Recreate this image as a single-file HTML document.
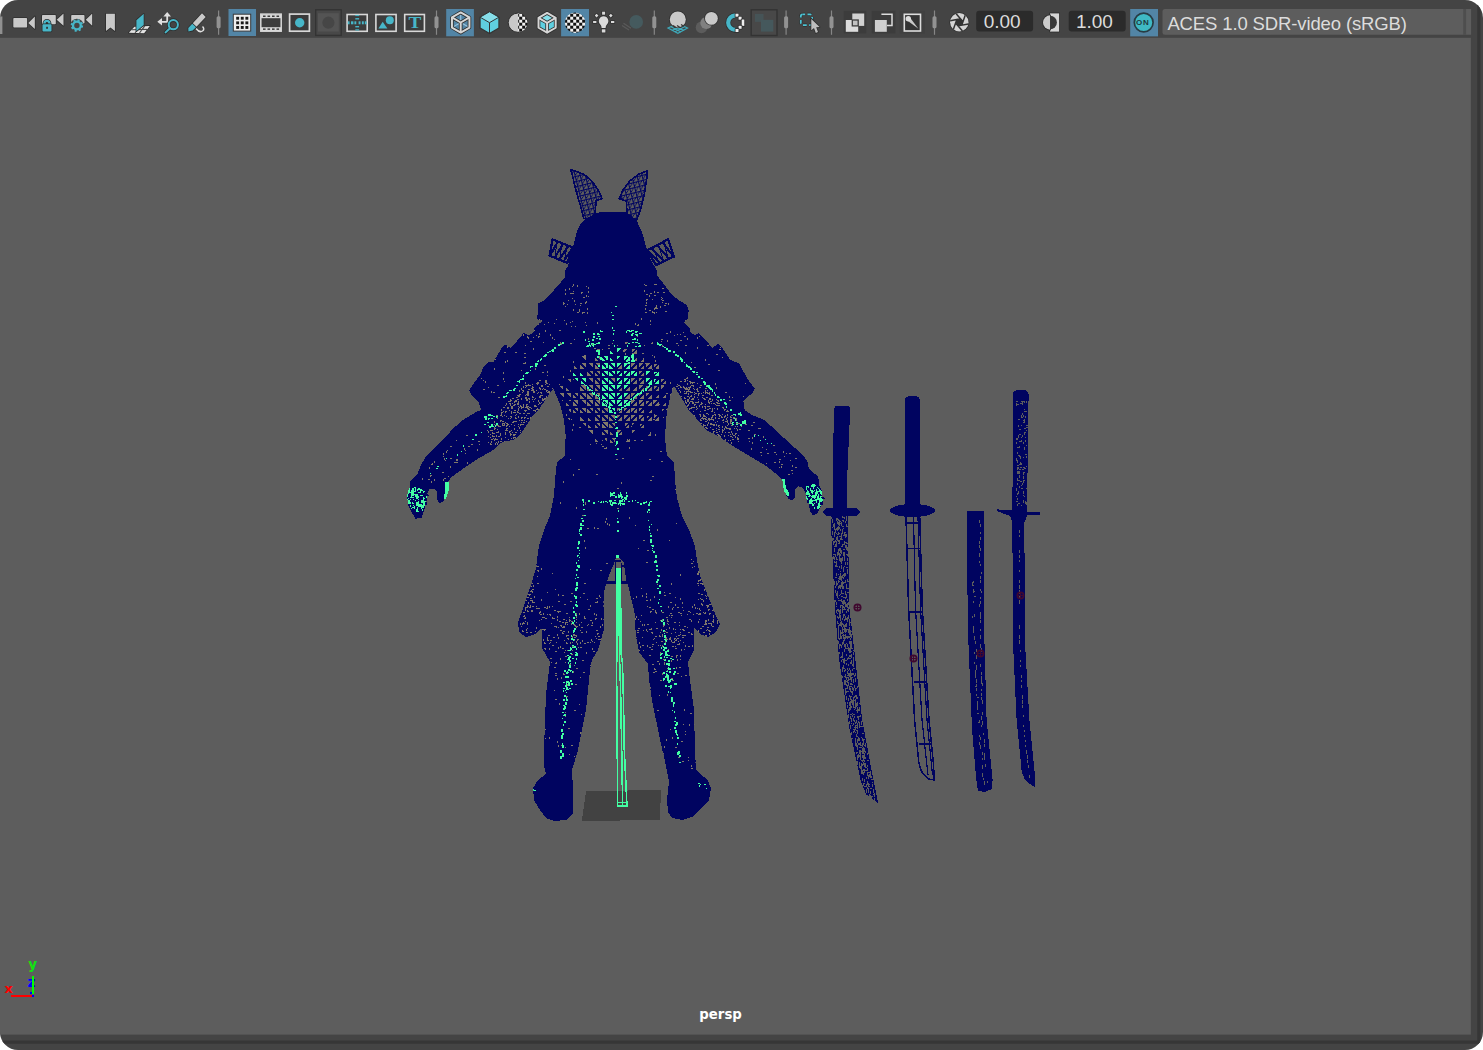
<!DOCTYPE html>
<html><head><meta charset="utf-8"><title>persp</title>
<style>
html,body{margin:0;padding:0;background:#fff;}
body{width:1483px;height:1050px;overflow:hidden;position:relative;}
#win{position:absolute;left:0;top:0;width:1483px;height:1050px;border-radius:18px;overflow:hidden;background:#444;}
#vp{position:absolute;left:0;top:38px;width:1471px;height:996.600px;background:#5d5d5d;}
#tbline{position:absolute;left:0;top:37px;width:1471px;height:1px;background:#494949;}
#rline{position:absolute;left:1477.300px;top:0;width:3.100px;height:1043.700px;background:#363636;}
#bline{position:absolute;left:0;top:1040.600px;width:1480.400px;height:3.100px;background:#363636;border-bottom-right-radius:2px;}
.t{position:absolute;white-space:nowrap;font-family:"Liberation Sans",sans-serif;color:#dcdcdc;line-height:1;}
.b{position:absolute;white-space:nowrap;font-family:"DejaVu Sans","Liberation Sans",sans-serif;font-weight:bold;line-height:1;}
</style></head><body>
<div id="win">
<svg width="1483" height="1050" viewBox="0 0 1483 1050" style="position:absolute;left:0;top:0">
<rect x="-1" y="37.800" width="1471.900" height="996.800" fill="#5d5d5d"/>
<rect x="1477.300" y="-1" width="3.100" height="1044.700" fill="#363636"/>
<rect x="-1" y="1040.600" width="1481.400" height="3.100" fill="#363636"/>
</svg>
<svg width="1483" height="1050" viewBox="0 0 1483 1050" shape-rendering="crispEdges" style="position:absolute;left:0;top:0">
<defs>
<pattern id="hx" width="5" height="5" patternUnits="userSpaceOnUse" patternTransform="rotate(-14)"><path d="M0 0.500H5M0.500 0V5M0 5L5 0" stroke="#000460" stroke-width="1.150" fill="none"/></pattern>
<pattern id="hf" width="5" height="5" patternUnits="userSpaceOnUse" patternTransform="rotate(20)"><path d="M0 0L5 5M0 0V5M2.5 0V5" stroke="#000460" stroke-width="1.2" fill="none"/></pattern>
<pattern id="tm" x="0.5" y="0.3" width="7.3" height="7.3" patternUnits="userSpaceOnUse"><path d="M1.5 2.5V6.3H5.3zM2.6 1.4H6.3V5z" fill="#80786a"/></pattern>
<pattern id="tc" x="0.5" y="0.3" width="7.3" height="7.3" patternUnits="userSpaceOnUse"><path d="M1.2 2.2V6.6H5.6zM2.3 1.1H6.6V5.3z" fill="#43ffa3"/></pattern>
<radialGradient id="tg" cx="0.5" cy="0.5" r="0.5"><stop offset="0.55" stop-color="#fff"/><stop offset="0.8" stop-color="#777"/><stop offset="1" stop-color="#000"/></radialGradient>
<clipPath id="bodyclip"><polygon points="596.0,213.5 601.0,211.5 617.0,211.5 626.0,212.5 632.0,216.5 636.4,220.2 639.1,225.7 641.5,231.0 643.5,236.7 645.7,245.4 648.0,253.0 652.0,262.0 656.7,270.0 657.3,276.0 663.3,283.3 671.3,294.0 679.3,300.7 686.7,304.7 688.7,310.0 688.0,318.0 684.0,322.7 690.0,328.7 690.7,332.7 695.3,335.3 698.7,332.7 706.0,340.7 712.7,348.0 718.0,343.3 722.0,347.3 730.0,359.3 735.3,362.0 739.3,363.3 743.3,371.3 748.7,380.7 754.7,388.7 752.7,392.7 743.3,400.7 744.7,410.0 752.0,415.0 764.6,420.0 780.6,434.9 793.1,446.3 802.3,454.3 808.0,462.3 808.6,468.0 818.3,477.1 818.9,484.0 821.7,490.9 822.9,500.0 820.6,506.9 817.1,513.7 812.6,515.4 810.3,511.4 808.6,503.4 805.7,493.1 802.3,487.4 797.7,486.3 794.9,489.7 795.4,497.7 792.0,500.6 788.6,498.9 786.3,495.4 782.3,479.4 776.0,473.7 765.7,465.7 754.3,458.9 742.9,452.0 731.4,445.1 720.0,437.1 706.0,430.0 696.0,418.0 688.7,410.0 680.7,396.7 674.0,386.0 670.0,398.0 667.3,410.0 666.0,420.0 665.0,438.0 667.0,456.0 674.0,462.0 675.0,480.0 677.0,498.0 682.0,516.0 689.0,530.0 695.0,546.0 697.0,560.0 700.0,576.0 708.0,596.0 716.0,616.0 720.0,624.0 716.0,632.0 708.0,637.0 700.0,634.0 694.0,628.0 694.0,650.0 688.0,662.0 690.0,680.0 694.0,710.0 695.0,750.0 696.0,770.0 700.0,774.0 707.0,779.0 711.0,788.0 709.0,800.0 700.0,810.0 692.0,817.0 682.0,820.0 672.0,818.0 668.0,812.0 667.0,800.0 669.0,782.0 666.0,766.0 661.0,744.0 656.0,720.0 652.0,700.0 649.0,680.0 648.0,664.0 639.0,652.0 635.8,635.0 634.6,613.6 632.8,605.0 630.3,594.7 627.7,584.0 606.0,584.0 603.7,593.0 603.7,630.0 598.0,650.0 592.0,660.0 590.0,670.0 588.0,690.0 586.0,710.0 582.0,730.0 578.0,750.0 572.0,770.0 573.0,790.0 573.0,814.0 566.0,820.0 554.0,821.0 546.0,818.0 540.0,810.0 534.0,800.0 533.0,788.0 538.0,780.0 546.0,774.0 544.0,766.0 544.0,750.0 545.0,720.0 546.0,694.0 548.0,678.0 550.0,662.0 542.0,648.0 542.0,630.0 541.0,628.0 536.0,634.0 526.0,637.0 519.0,632.0 518.0,622.0 524.0,606.0 530.0,588.0 536.0,568.0 537.0,560.0 539.0,546.0 544.0,530.0 550.0,516.0 554.0,496.0 555.0,480.0 557.0,462.0 565.0,456.0 565.0,440.0 566.0,438.0 564.0,420.0 560.0,404.0 553.3,388.7 546.7,398.0 538.7,410.0 534.0,414.0 526.0,426.0 520.0,434.9 514.3,439.4 500.6,442.9 493.7,449.7 477.7,458.9 464.0,468.0 451.4,477.1 448.0,481.7 449.1,488.6 444.6,498.9 442.9,501.7 439.4,503.4 436.6,498.9 437.1,492.0 434.3,488.6 429.7,489.1 427.4,493.1 426.9,500.0 424.0,510.3 421.7,517.7 415.4,518.9 412.6,513.7 409.1,506.9 407.4,498.9 409.7,488.6 410.3,481.7 417.1,474.9 420.6,465.7 425.1,457.7 438.9,444.0 453.7,428.0 462.9,420.0 476.0,412.0 481.3,410.0 478.7,402.0 470.7,394.0 469.3,390.0 474.7,382.0 480.0,375.3 484.0,366.0 488.0,362.0 493.3,362.0 501.3,348.7 505.3,344.7 510.7,348.0 517.3,340.7 524.0,332.7 528.0,335.3 533.3,332.7 534.7,327.3 542.0,321.3 537.3,319.3 538.0,303.3 544.0,300.7 550.7,294.0 557.3,286.0 564.7,278.0 565.3,270.0 568.0,266.0 571.5,252.0 573.4,245.4 575.6,236.7 577.2,230.5 579.4,225.7 583.8,220.2 589.3,217.0"/></clipPath>
</defs>
<polygon points="586.1,791.4 661.1,789.8 659.8,819.6 581.8,821.4" fill="#424242"/>
<polygon points="570.7,169.6 583.8,174.2 592.6,181.9 599.1,191.8 602.0,198.6 596.2,200.8 595.0,213.0 590.0,219.0 583.8,218.5 580.5,206.0 576.1,190.7 572.0,174.0" fill="url(#hx)" stroke="#000460" stroke-width="1.6"/>
<polygon points="647.3,170.8 638.6,174.2 629.8,180.8 623.2,189.6 619.3,198.6 626.3,201.0 627.0,213.0 631.0,219.0 636.4,220.5 640.7,209.3 644.0,196.1 646.8,178.6" fill="url(#hx)" stroke="#000460" stroke-width="1.6"/>
<polygon points="552.6,239.4 572.9,247.6 567.4,263.0 549.6,255.6" fill="none" stroke="#000460" stroke-width="2.300"/>
<path d="M550.0 255.7L557.9 241.5M554.6 257.7L563.2 243.7M559.2 259.6L568.4 245.8M563.5 261.4L572.9 247.6" fill="none" stroke="#000460" stroke-width="2.100"/>
<path d="M555.1 257.9L556.9 241.1M559.6 259.7L561.9 243.2M564.2 261.7L567.2 245.3" fill="none" stroke="#000460" stroke-width="1"/>
<polygon points="668.0,239.4 647.0,250.5 656.0,265.0 674.0,256.5" fill="none" stroke="#000460" stroke-width="2.300"/>
<path d="M673.6 256.7L662.5 242.3M669.0 258.9L657.1 245.2M664.3 261.1L651.6 248.1M660.0 263.1L647.0 250.5" fill="none" stroke="#000460" stroke-width="2.100"/>
<path d="M668.4 259.1L663.6 241.7M663.9 261.3L658.3 244.5M659.2 263.5L652.9 247.4" fill="none" stroke="#000460" stroke-width="1"/>
<polygon points="596.0,213.5 601.0,211.5 617.0,211.5 626.0,212.5 632.0,216.5 636.4,220.2 639.1,225.7 641.5,231.0 643.5,236.7 645.7,245.4 648.0,253.0 652.0,262.0 656.7,270.0 657.3,276.0 663.3,283.3 671.3,294.0 679.3,300.7 686.7,304.7 688.7,310.0 688.0,318.0 684.0,322.7 690.0,328.7 690.7,332.7 695.3,335.3 698.7,332.7 706.0,340.7 712.7,348.0 718.0,343.3 722.0,347.3 730.0,359.3 735.3,362.0 739.3,363.3 743.3,371.3 748.7,380.7 754.7,388.7 752.7,392.7 743.3,400.7 744.7,410.0 752.0,415.0 764.6,420.0 780.6,434.9 793.1,446.3 802.3,454.3 808.0,462.3 808.6,468.0 818.3,477.1 818.9,484.0 821.7,490.9 822.9,500.0 820.6,506.9 817.1,513.7 812.6,515.4 810.3,511.4 808.6,503.4 805.7,493.1 802.3,487.4 797.7,486.3 794.9,489.7 795.4,497.7 792.0,500.6 788.6,498.9 786.3,495.4 782.3,479.4 776.0,473.7 765.7,465.7 754.3,458.9 742.9,452.0 731.4,445.1 720.0,437.1 706.0,430.0 696.0,418.0 688.7,410.0 680.7,396.7 674.0,386.0 670.0,398.0 667.3,410.0 666.0,420.0 665.0,438.0 667.0,456.0 674.0,462.0 675.0,480.0 677.0,498.0 682.0,516.0 689.0,530.0 695.0,546.0 697.0,560.0 700.0,576.0 708.0,596.0 716.0,616.0 720.0,624.0 716.0,632.0 708.0,637.0 700.0,634.0 694.0,628.0 694.0,650.0 688.0,662.0 690.0,680.0 694.0,710.0 695.0,750.0 696.0,770.0 700.0,774.0 707.0,779.0 711.0,788.0 709.0,800.0 700.0,810.0 692.0,817.0 682.0,820.0 672.0,818.0 668.0,812.0 667.0,800.0 669.0,782.0 666.0,766.0 661.0,744.0 656.0,720.0 652.0,700.0 649.0,680.0 648.0,664.0 639.0,652.0 635.8,635.0 634.6,613.6 632.8,605.0 630.3,594.7 627.7,584.0 606.0,584.0 603.7,593.0 603.7,630.0 598.0,650.0 592.0,660.0 590.0,670.0 588.0,690.0 586.0,710.0 582.0,730.0 578.0,750.0 572.0,770.0 573.0,790.0 573.0,814.0 566.0,820.0 554.0,821.0 546.0,818.0 540.0,810.0 534.0,800.0 533.0,788.0 538.0,780.0 546.0,774.0 544.0,766.0 544.0,750.0 545.0,720.0 546.0,694.0 548.0,678.0 550.0,662.0 542.0,648.0 542.0,630.0 541.0,628.0 536.0,634.0 526.0,637.0 519.0,632.0 518.0,622.0 524.0,606.0 530.0,588.0 536.0,568.0 537.0,560.0 539.0,546.0 544.0,530.0 550.0,516.0 554.0,496.0 555.0,480.0 557.0,462.0 565.0,456.0 565.0,440.0 566.0,438.0 564.0,420.0 560.0,404.0 553.3,388.7 546.7,398.0 538.7,410.0 534.0,414.0 526.0,426.0 520.0,434.9 514.3,439.4 500.6,442.9 493.7,449.7 477.7,458.9 464.0,468.0 451.4,477.1 448.0,481.7 449.1,488.6 444.6,498.9 442.9,501.7 439.4,503.4 436.6,498.9 437.1,492.0 434.3,488.6 429.7,489.1 427.4,493.1 426.9,500.0 424.0,510.3 421.7,517.7 415.4,518.9 412.6,513.7 409.1,506.9 407.4,498.9 409.7,488.6 410.3,481.7 417.1,474.9 420.6,465.7 425.1,457.7 438.9,444.0 453.7,428.0 462.9,420.0 476.0,412.0 481.3,410.0 478.7,402.0 470.7,394.0 469.3,390.0 474.7,382.0 480.0,375.3 484.0,366.0 488.0,362.0 493.3,362.0 501.3,348.7 505.3,344.7 510.7,348.0 517.3,340.7 524.0,332.7 528.0,335.3 533.3,332.7 534.7,327.3 542.0,321.3 537.3,319.3 538.0,303.3 544.0,300.7 550.7,294.0 557.3,286.0 564.7,278.0 565.3,270.0 568.0,266.0 571.5,252.0 573.4,245.4 575.6,236.7 577.2,230.5 579.4,225.7 583.8,220.2 589.3,217.0" fill="#000460"/>
<polygon points="616.500,556.500 607.100,580.600 626.400,580.600 623.700,562 620,558.500" fill="#5d5d5d"/>
<path d="M614.700 560h1v21h-1zM620.800 563h1v18h-1zM611 563h2.500v1.500h-2.500zM610 566h1v4h-1zM616 560h5v2h-5zM621.800 564l2 1.500v2l-2-1.500z" fill="#000460"/>
<g clip-path="url(#bodyclip)">
<path d="M560.2 386.2L563.4 386.2L563.4 389.8zM560.1 393.4L563.7 393.4L563.7 397.1zM567.7 379.0L570.9 379.0L570.9 382.3zM565.7 387.1L565.7 391.1L569.2 391.1zM567.3 393.4L571.0 393.4L571.0 397.2zM566.1 402.4L566.1 405.8L569.4 405.8zM567.6 408.5L570.7 408.5L570.7 411.9zM573.8 365.7L573.8 368.7L576.9 368.7zM573.0 394.5L573.0 398.4L577.0 398.4zM574.6 393.3L578.2 393.3L578.2 397.1zM573.0 402.0L573.0 405.9L577.0 405.9zM574.1 400.2L578.4 400.2L578.4 404.4zM572.9 409.2L572.9 412.9L576.8 412.9zM574.6 408.1L578.1 408.1L578.1 411.5zM581.6 356.0L585.6 356.0L585.6 360.1zM580.3 364.9L580.3 369.0L584.3 369.0zM581.6 363.4L585.6 363.4L585.6 367.3zM580.0 386.8L580.0 391.2L584.3 391.2zM581.4 385.4L585.7 385.4L585.7 389.8zM580.0 394.1L580.0 398.6L584.3 398.6zM581.4 392.8L585.7 392.8L585.7 397.2zM581.6 400.4L585.7 400.4L585.7 404.6zM580.1 409.1L580.1 413.4L584.1 413.4zM581.9 408.1L585.6 408.1L585.6 412.0zM580.0 416.4L580.0 420.5L584.2 420.5zM581.8 422.8L585.6 422.8L585.6 426.3zM588.8 363.3L592.9 363.3L592.9 367.5zM587.3 371.9L587.3 376.4L591.7 376.4zM588.7 370.6L593.1 370.6L593.1 375.0zM588.7 377.9L593.1 377.9L593.1 382.4zM587.3 386.8L587.3 391.2L591.7 391.2zM588.7 385.4L593.1 385.4L593.1 389.8zM587.3 394.1L587.3 398.6L591.7 398.6zM588.7 392.8L593.1 392.8L593.1 397.2zM587.3 401.6L587.3 406.0L591.7 406.0zM588.7 400.2L593.1 400.2L593.1 404.6zM587.3 408.9L587.3 413.4L591.7 413.4zM588.7 407.6L593.1 407.6L593.1 412.0zM587.6 416.7L587.6 420.8L591.6 420.8zM587.6 424.1L587.6 428.1L591.4 428.1zM589.0 430.1L592.9 430.1L592.9 434.1zM596.6 348.9L600.0 348.9L600.0 352.3zM595.2 357.7L595.2 361.4L598.8 361.4zM596.0 355.8L600.3 355.8L600.3 360.1zM594.6 364.6L594.6 369.0L599.0 369.0zM596.0 363.2L600.4 363.2L600.4 367.6zM594.6 371.9L594.6 376.4L599.0 376.4zM596.0 370.6L600.4 370.6L600.4 375.0zM594.6 379.3L594.6 383.8L599.0 383.8zM596.0 377.9L600.4 377.9L600.4 382.4zM594.6 386.8L594.6 391.2L599.0 391.2zM596.0 385.4L600.4 385.4L600.4 389.8zM594.6 394.1L594.6 398.6L599.0 398.6zM596.0 392.8L600.4 392.8L600.4 397.2zM594.6 401.6L594.6 406.0L599.0 406.0zM596.0 400.2L600.4 400.2L600.4 404.6zM594.6 408.9L594.6 413.4L599.0 413.4zM596.0 407.6L600.4 407.6L600.4 412.0zM594.6 416.4L594.6 420.8L599.0 420.8zM596.0 415.0L600.4 415.0L600.4 419.4zM594.9 424.0L594.9 428.1L599.0 428.1zM596.3 422.7L600.4 422.7L600.4 426.5zM595.0 439.0L595.0 442.4L599.0 442.4zM601.9 408.9L601.9 413.4L606.3 413.4zM603.3 407.6L607.7 407.6L607.7 412.0zM601.9 416.4L601.9 420.8L606.3 420.8zM603.3 415.0L607.7 415.0L607.7 419.4zM602.1 423.9L602.1 428.2L606.2 428.2zM603.4 422.4L607.6 422.4L607.6 426.8zM602.1 431.3L602.1 435.4L606.3 435.4zM603.8 430.2L607.5 430.2L607.5 434.0zM603.7 437.5L607.1 437.5L607.1 441.5zM610.7 377.9L615.1 377.9L615.1 382.4zM609.3 416.4L609.3 420.8L613.7 420.8zM610.7 415.0L615.1 415.0L615.1 419.4zM609.3 423.8L609.3 428.1L613.6 428.1zM610.9 422.5L615.0 422.5L615.0 426.7zM609.8 431.7L609.8 435.4L613.6 435.4zM610.4 439.7L610.4 442.5L613.2 442.5zM611.1 437.6L614.8 437.6L614.8 441.0zM622.4 364.6L622.4 369.0L618.0 369.0zM622.4 386.8L622.4 391.2L618.0 391.2zM622.4 408.9L622.4 413.4L618.0 413.4zM621.0 407.6L616.6 407.6L616.6 412.0zM622.4 416.4L622.4 420.8L618.0 420.8zM621.0 415.0L616.6 415.0L616.6 419.4zM622.3 431.2L622.3 435.4L618.1 435.4zM620.8 430.3L617.2 430.3L617.2 434.0zM628.1 342.2L625.2 342.2L625.2 344.7zM628.2 348.5L624.1 348.5L624.1 352.4zM629.7 386.8L629.7 391.2L625.3 391.2zM629.7 394.1L629.7 398.6L625.3 398.6zM629.7 408.9L629.7 413.4L625.3 413.4zM628.3 407.6L623.9 407.6L623.9 412.0zM629.7 416.4L629.7 420.8L625.3 420.8zM628.3 415.0L623.9 415.0L623.9 419.4zM629.4 424.0L629.4 428.1L625.6 428.1zM628.3 422.9L624.5 422.9L624.5 426.7zM629.7 438.6L629.7 442.3L625.4 442.3zM636.5 350.1L636.5 353.8L633.0 353.8zM635.5 349.2L632.1 349.2L632.1 352.6zM636.8 357.6L636.8 361.4L633.1 361.4zM637.0 364.6L637.0 369.0L632.7 369.0zM635.6 363.2L631.3 363.2L631.3 367.6zM637.0 379.3L637.0 383.8L632.7 383.8zM635.6 377.9L631.3 377.9L631.3 382.4zM637.0 386.8L637.0 391.2L632.7 391.2zM637.0 394.1L637.0 398.6L632.7 398.6zM635.6 392.8L631.3 392.8L631.3 397.2zM637.0 401.6L637.0 406.0L632.7 406.0zM635.6 400.2L631.3 400.2L631.3 404.6zM637.0 408.9L637.0 413.4L632.7 413.4zM635.6 407.6L631.3 407.6L631.3 412.0zM637.0 416.4L637.0 420.8L632.7 420.8zM635.6 415.0L631.3 415.0L631.3 419.4zM635.4 422.6L631.5 422.6L631.5 426.5zM635.6 430.1L631.6 430.1L631.6 434.1zM643.8 358.1L643.8 361.5L640.9 361.5zM644.3 364.7L644.3 369.0L640.1 369.0zM642.8 363.3L638.7 363.3L638.7 367.4zM644.4 371.9L644.4 376.4L640.0 376.4zM643.0 370.6L638.6 370.6L638.6 375.0zM644.4 379.3L644.4 383.8L640.0 383.8zM643.0 377.9L638.6 377.9L638.6 382.4zM644.4 386.8L644.4 391.2L640.0 391.2zM643.0 385.4L638.6 385.4L638.6 389.8zM644.4 394.1L644.4 398.6L640.0 398.6zM643.0 392.8L638.6 392.8L638.6 397.2zM644.4 401.6L644.4 406.0L640.0 406.0zM643.0 400.2L638.6 400.2L638.6 404.6zM644.4 408.9L644.4 413.4L640.0 413.4zM643.0 407.6L638.6 407.6L638.6 412.0zM644.1 416.7L644.1 420.8L640.3 420.8zM642.7 415.4L639.1 415.4L639.1 419.3zM643.8 424.9L643.8 427.9L641.1 427.9zM642.7 423.5L639.7 423.5L639.7 426.3zM651.5 364.8L651.5 368.7L647.6 368.7zM650.2 363.3L646.1 363.3L646.1 367.2zM651.5 386.8L651.5 391.1L647.3 391.1zM650.1 385.8L646.4 385.8L646.4 389.7zM651.7 394.4L651.7 398.6L647.6 398.6zM650.2 392.8L646.0 392.8L646.0 397.0zM651.7 401.9L651.7 405.8L647.7 405.8zM650.3 400.5L646.2 400.5L646.2 404.4zM651.7 409.5L651.7 413.1L647.9 413.1zM651.6 416.8L651.6 420.5L647.8 420.5zM650.0 415.5L646.5 415.5L646.5 419.4zM651.1 431.7L651.1 435.5L647.9 435.5zM658.5 365.2L658.5 368.9L655.3 368.9zM657.4 363.8L653.9 363.8L653.9 367.6zM658.9 387.3L658.9 391.1L655.2 391.1zM657.6 385.6L653.5 385.6L653.5 389.6zM659.0 394.6L659.0 398.4L655.1 398.4zM658.9 401.9L658.9 406.0L655.0 406.0zM657.4 400.2L653.3 400.2L653.3 404.5zM658.6 416.6L658.6 420.8L654.9 420.8zM657.6 415.4L653.7 415.4L653.7 419.2zM666.2 380.5L666.2 383.7L663.1 383.7zM664.4 378.7L661.3 378.7L661.3 381.9zM664.6 385.4L660.6 385.4L660.6 389.5zM666.1 394.9L666.1 398.0L662.8 398.0zM666.3 402.6L666.3 405.7L663.1 405.7zM665.0 408.8L661.8 408.8L661.8 411.6z" fill="#80786a"/>
<path d="M573.2 372.5L573.2 376.0L577.0 376.0zM574.4 378.4L578.2 378.4L578.2 382.2zM580.3 372.3L580.3 376.2L584.1 376.2zM580.5 379.9L580.5 383.7L584.1 383.7zM581.7 378.3L585.7 378.3L585.7 382.4zM602.0 357.2L602.0 361.4L606.0 361.4zM603.4 355.8L607.5 355.8L607.5 360.1zM601.9 364.6L601.9 369.0L606.3 369.0zM603.3 363.2L607.7 363.2L607.7 367.6zM601.9 371.9L601.9 376.4L606.3 376.4zM603.3 370.6L607.7 370.6L607.7 375.0zM601.9 379.3L601.9 383.8L606.3 383.8zM603.3 377.9L607.7 377.9L607.7 382.4zM601.9 386.8L601.9 391.2L606.3 391.2zM603.3 385.4L607.7 385.4L607.7 389.8zM601.9 394.1L601.9 398.6L606.3 398.6zM603.3 392.8L607.7 392.8L607.7 397.2zM601.9 401.6L601.9 406.0L606.3 406.0zM603.3 400.2L607.7 400.2L607.7 404.6zM609.8 350.3L609.8 354.0L613.4 354.0zM609.6 357.5L609.6 361.3L613.5 361.3zM609.3 364.6L609.3 369.0L613.7 369.0zM610.7 363.2L615.1 363.2L615.1 367.6zM609.3 371.9L609.3 376.4L613.7 376.4zM610.7 370.6L615.1 370.6L615.1 375.0zM609.3 379.3L609.3 383.8L613.7 383.8zM609.3 386.8L609.3 391.2L613.7 391.2zM610.7 385.4L615.1 385.4L615.1 389.8zM609.3 394.1L609.3 398.6L613.7 398.6zM610.7 392.8L615.1 392.8L615.1 397.2zM609.3 401.6L609.3 406.0L613.7 406.0zM610.7 400.2L615.1 400.2L615.1 404.6zM609.3 408.9L609.3 413.4L613.7 413.4zM610.7 407.6L615.1 407.6L615.1 412.0zM620.9 348.4L616.7 348.4L616.7 352.3zM620.8 355.9L616.8 355.9L616.8 360.1zM621.0 363.2L616.6 363.2L616.6 367.6zM622.4 371.9L622.4 376.4L618.0 376.4zM621.0 370.6L616.6 370.6L616.6 375.0zM622.4 379.3L622.4 383.8L618.0 383.8zM621.0 377.9L616.6 377.9L616.6 382.4zM621.0 385.4L616.6 385.4L616.6 389.8zM622.4 394.1L622.4 398.6L618.0 398.6zM621.0 392.8L616.6 392.8L616.6 397.2zM622.4 401.6L622.4 406.0L618.0 406.0zM621.0 400.2L616.6 400.2L616.6 404.6zM629.7 357.2L629.7 361.4L625.4 361.4zM628.1 355.9L624.1 355.9L624.1 360.2zM629.7 364.6L629.7 369.0L625.3 369.0zM628.3 363.2L623.9 363.2L623.9 367.6zM629.7 371.9L629.7 376.4L625.3 376.4zM628.3 370.6L623.9 370.6L623.9 375.0zM629.7 379.3L629.7 383.8L625.3 383.8zM628.3 377.9L623.9 377.9L623.9 382.4zM628.3 385.4L623.9 385.4L623.9 389.8zM628.3 392.8L623.9 392.8L623.9 397.2zM629.7 401.6L629.7 406.0L625.3 406.0zM628.3 400.2L623.9 400.2L623.9 404.6zM637.0 371.9L637.0 376.4L632.7 376.4zM635.6 370.6L631.3 370.6L631.3 375.0zM650.1 370.9L646.3 370.9L646.3 375.0zM651.5 379.7L651.5 383.6L647.7 383.6zM650.2 378.3L646.3 378.3L646.3 382.2zM658.5 372.1L658.5 376.0L654.8 376.0zM657.6 371.5L654.2 371.5L654.2 374.7zM658.9 379.9L658.9 383.6L655.2 383.6zM657.4 378.5L653.8 378.5L653.8 382.3z" fill="#43ffa3"/>
</g>
<polygon points="409.0,488.0 418.0,487.0 427.0,493.0 426.0,503.0 422.0,512.0 414.0,512.0 408.0,504.0 407.0,496.0" fill="#43ffa3"/>
<polygon points="806.0,486.0 814.0,484.0 822.0,492.0 823.0,502.0 818.0,510.0 811.0,508.0 806.0,498.0" fill="#43ffa3"/>
<path d="M421 496h3v1h-3zM426 495h3v1h-3zM409 494h2v3h-2zM419 508h2v3h-2zM425 494h3v1h-3zM416 499h2v3h-2zM414 489h1v2h-1zM412 498h3v1h-3zM416 499h1v3h-1zM418 490h2v2h-2zM424 499h2v2h-2zM419 507h2v1h-2zM410 500h2v2h-2zM424 494h3v1h-3zM413 501h2v2h-2zM418 494h3v1h-3zM408 495h2v3h-2zM407 497h1v2h-1zM414 509h1v2h-1zM409 493h2v2h-2zM411 504h3v1h-3zM414 492h2v2h-2zM418 493h2v3h-2zM419 499h2v3h-2zM425 493h2v2h-2zM422 503h1v2h-1zM414 501h2v3h-2zM415 506h3v1h-3zM425 498h1v3h-1zM414 499h1v3h-1zM423 493h1v2h-1zM424 495h2v3h-2zM416 487h3v1h-3zM414 497h1v2h-1zM410 489h1v3h-1zM416 493h2v1h-2zM416 489h1v2h-1zM416 491h2v3h-2zM419 496h2v2h-2zM419 501h2v3h-2zM415 492h2v1h-2zM418 508h2v3h-2zM418 500h2v1h-2zM421 494h3v1h-3zM418 507h2v1h-2zM412 496h2v1h-2zM415 506h2v3h-2zM414 509h2v3h-2zM408 499h2v1h-2zM420 493h2v2h-2zM411 499h2v3h-2zM408 504h2v2h-2zM412 505h1v2h-1zM425 502h2v3h-2zM423 495h3v1h-3zM425 498h2v1h-2zM408 494h2v3h-2zM410 488h2v2h-2zM418 510h2v1h-2zM420 509h2v3h-2zM419 510h1v3h-1zM414 495h1v3h-1zM409 498h3v1h-3zM421 497h2v3h-2zM421 503h2v1h-2zM413 500h2v3h-2zM411 502h1v2h-1zM424 495h1v2h-1zM424 492h2v3h-2zM414 504h2v2h-2zM414 488h1v2h-1zM418 498h3v1h-3zM409 493h2v3h-2zM416 491h1v2h-1zM422 508h3v1h-3zM414 509h1v2h-1zM421 491h2v3h-2zM418 509h2v2h-2zM411 505h1v3h-1zM414 497h2v3h-2zM410 504h3v1h-3zM412 508h2v3h-2zM411 506h3v1h-3zM419 493h2v1h-2zM416 487h2v2h-2zM814 493h1v2h-1zM815 498h2v1h-2zM811 494h3v1h-3zM820 502h2v2h-2zM815 489h1v3h-1zM808 485h2v1h-2zM816 507h1v3h-1zM814 487h2v3h-2zM821 497h3v1h-3zM806 495h2v1h-2zM815 504h1v3h-1zM814 504h1v2h-1zM808 488h2v3h-2zM810 493h2v2h-2zM811 504h1v3h-1zM811 487h2v3h-2zM815 507h1v3h-1zM816 496h1v2h-1zM817 494h1v2h-1zM817 488h1v3h-1zM814 491h2v1h-2zM807 487h1v3h-1zM812 499h3v1h-3zM811 493h1v3h-1zM808 488h2v3h-2zM813 489h1v2h-1zM820 504h3v1h-3zM808 485h3v1h-3zM812 507h2v2h-2zM822 497h1v2h-1zM815 486h2v3h-2zM807 500h2v3h-2zM819 494h2v1h-2zM811 507h1v2h-1zM818 493h2v1h-2zM817 502h1v2h-1zM822 498h3v1h-3zM810 496h1v3h-1zM816 503h2v3h-2zM815 502h1v3h-1zM819 495h3v1h-3zM810 493h2v2h-2zM806 490h1v2h-1zM808 488h2v3h-2zM817 501h1v3h-1zM819 495h1v3h-1zM813 502h3v1h-3zM818 492h2v1h-2zM813 489h1v2h-1zM809 491h2v2h-2zM809 490h1v3h-1zM814 506h3v1h-3zM813 501h3v1h-3zM813 501h1v3h-1zM822 502h1v3h-1zM808 497h2v3h-2zM822 501h1v3h-1zM809 504h2v3h-2zM818 501h1v2h-1zM812 502h3v1h-3zM808 488h2v2h-2zM807 496h1v2h-1zM807 495h2v1h-2zM812 498h2v2h-2zM810 497h2v1h-2zM812 502h2v1h-2zM817 489h2v2h-2zM816 509h2v3h-2zM814 487h1v2h-1zM817 500h2v3h-2zM817 501h2v2h-2zM809 485h2v3h-2zM813 492h2v2h-2zM812 506h3v1h-3zM809 486h2v2h-2z" fill="#000460"/>
<polygon points="444.5,481.5 449,481.5 449.2,489 446,498.5 444,498.5 445,489" fill="#43ffa3"/>
<polygon points="782.3,479.4 784.5,479.4 786,488 789.7,494 788,496.6 784.5,492 783,486" fill="#43ffa3"/>
<path d="M584 384h1v1h-1zM585 385h1v1h-1zM586 385h1v1h-1zM587 386h1v2h-1zM587 387h2v2h-2zM589 389h1v2h-1zM590 389h1v1h-1zM591 390h2v1h-2zM592 392h1v2h-1zM593 393h2v2h-2zM594 392h1v1h-1zM596 394h1v2h-1zM596 395h2v1h-2zM597 395h2v1h-2zM598 396h1v1h-1zM599 397h1v1h-1zM599 398h1v2h-1zM601 399h1v1h-1zM603 400h2v1h-2zM603 401h1v1h-1zM605 403h1v1h-1zM606 404h1v2h-1zM606 405h1v2h-1zM608 406h2v2h-2zM609 407h2v2h-2zM610 408h1v1h-1zM611 410h1v1h-1zM650 384h2v1h-2zM649 384h1v2h-1zM648 386h2v1h-2zM647 387h2v1h-2zM645 388h2v2h-2zM645 389h2v2h-2zM643 390h1v2h-1zM642 390h1v1h-1zM641 391h1v2h-1zM640 392h2v2h-2zM639 393h1v1h-1zM637 393h2v2h-2zM636 394h2v2h-2zM635 395h1v2h-1zM634 396h2v1h-2zM633 397h2v1h-2zM633 398h1v2h-1zM631 398h1v1h-1zM630 399h2v1h-2zM629 401h2v1h-2zM628 402h2v2h-2zM626 403h2v2h-2zM626 404h2v2h-2zM624 405h1v1h-1zM624 405h2v2h-2zM622 407h2v1h-2zM621 407h1v2h-1zM620 409h2v1h-2zM619 409h1v2h-1zM615 306h2v1h-2zM611 312h1v1h-1zM612 315h2v1h-2zM612 319h2v1h-2zM612 327h1v2h-1zM613 330h2v1h-2zM613 333h1v2h-1zM613 340h1v1h-1zM614 345h1v2h-1zM614 412h2v2h-2zM615 416h2v2h-2zM615 419h1v1h-1zM615 422h2v1h-2zM616 427h2v2h-2zM615 428h2v1h-2zM616 432h2v2h-2zM616 434h2v2h-2zM616 436h2v1h-2zM615 438h1v1h-1zM616 441h2v2h-2zM616 443h2v1h-2zM616 444h1v1h-1zM615 445h1v1h-1zM617 448h2v2h-2zM615 454h2v1h-2zM585 339h1v2h-1zM598 336h2v1h-2zM597 333h2v1h-2zM591 343h1v2h-1zM587 345h3v1h-3zM600 331h3v1h-3zM597 334h3v1h-3zM590 345h1v2h-1zM600 330h1v2h-1zM593 344h3v1h-3zM592 344h2v2h-2zM596 343h2v1h-2zM588 341h2v1h-2zM583 331h2v2h-2zM586 346h3v1h-3zM598 334h2v1h-2zM589 343h1v2h-1zM593 333h2v2h-2zM593 345h1v2h-1zM592 343h2v2h-2zM596 338h2v1h-2zM592 339h2v2h-2zM598 342h2v2h-2zM599 338h2v2h-2zM589 345h2v1h-2zM593 336h2v2h-2zM637 339h1v2h-1zM635 332h2v1h-2zM632 342h2v1h-2zM632 339h2v1h-2zM626 331h1v2h-1zM639 345h2v1h-2zM638 346h3v1h-3zM635 334h2v1h-2zM629 331h3v1h-3zM636 335h2v1h-2zM636 335h2v1h-2zM632 333h2v1h-2zM631 334h2v2h-2zM634 338h2v2h-2zM628 343h2v1h-2zM631 330h3v1h-3zM635 331h3v1h-3zM635 346h2v1h-2zM639 333h3v1h-3zM635 342h3v1h-3zM627 330h3v1h-3zM635 334h3v1h-3zM638 343h2v1h-2zM627 345h1v2h-1zM598 350h2v3h-2zM596 350h2v2h-2zM597 356h2v2h-2zM598 365h2v2h-2zM600 357h2v3h-2zM598 351h2v3h-2zM598 352h2v3h-2zM606 365h2v3h-2zM606 358h2v2h-2zM596 350h2v2h-2zM626 360h2v2h-2zM632 354h2v3h-2zM628 357h2v2h-2zM631 355h2v3h-2zM633 360h2v2h-2zM628 362h2v2h-2zM631 360h2v2h-2zM632 357h2v3h-2zM562 342h2v2h-2zM560 343h2v2h-2zM560 344h2v1h-2zM558 344h2v1h-2zM558 345h2v1h-2zM554 347h2v2h-2zM555 348h1v1h-1zM552 349h2v2h-2zM552 350h2v2h-2zM551 350h1v1h-1zM549 351h2v1h-2zM547 352h2v1h-2zM545 354h2v2h-2zM545 355h2v1h-2zM544 355h2v2h-2zM543 356h2v1h-2zM541 358h1v2h-1zM540 359h2v1h-2zM540 360h1v1h-1zM538 360h1v2h-1zM537 361h1v1h-1zM536 363h2v2h-2zM535 363h1v2h-1zM535 365h2v2h-2zM531 366h2v1h-2zM530 366h1v2h-1zM530 370h1v1h-1zM528 372h1v1h-1zM526 372h2v2h-2zM525 373h2v1h-2zM523 375h1v2h-1zM523 376h1v1h-1zM522 378h2v2h-2zM520 379h2v1h-2zM519 380h1v1h-1zM519 381h1v2h-1zM517 381h2v1h-2zM516 385h2v1h-2zM514 388h2v1h-2zM513 389h2v2h-2zM510 390h2v1h-2zM509 390h2v1h-2zM507 392h2v1h-2zM506 393h2v1h-2zM506 395h1v2h-1zM503 396h2v2h-2zM504 396h2v1h-2zM503 397h2v1h-2zM488 418h2v1h-2zM496 417h2v1h-2zM488 418h1v2h-1zM496 416h2v1h-2zM495 425h1v2h-1zM484 424h2v1h-2zM489 426h2v2h-2zM487 422h2v1h-2zM489 414h2v2h-2zM486 416h1v2h-1zM488 414h1v2h-1zM485 418h2v2h-2zM484 416h2v1h-2zM490 426h2v1h-2zM493 416h2v1h-2zM491 415h2v1h-2zM496 423h2v2h-2zM489 426h1v2h-1zM484 417h2v1h-2zM491 424h2v2h-2zM492 426h2v1h-2zM491 418h2v1h-2zM481 432h1v1h-1zM475 434h2v2h-2zM472 439h2v1h-2zM463 445h1v2h-1zM463 446h1v1h-1zM461 451h1v1h-1zM457 454h1v2h-1zM446 458h1v1h-1zM437 466h2v1h-2zM436 468h2v1h-2zM430 473h1v1h-1zM657 342h1v2h-1zM657 343h2v2h-2zM658 343h1v1h-1zM659 344h2v2h-2zM661 344h1v1h-1zM662 346h2v1h-2zM664 347h2v1h-2zM666 348h2v2h-2zM668 350h1v2h-1zM669 350h2v2h-2zM673 351h2v2h-2zM675 354h1v2h-1zM676 354h1v2h-1zM676 355h2v1h-2zM677 355h2v2h-2zM680 357h1v1h-1zM680 358h2v2h-2zM681 360h2v2h-2zM681 359h2v1h-2zM684 362h1v1h-1zM686 364h1v2h-1zM686 365h2v2h-2zM686 365h2v2h-2zM688 366h2v2h-2zM689 367h2v1h-2zM690 368h2v2h-2zM692 371h1v1h-1zM693 371h2v2h-2zM696 372h2v1h-2zM696 374h2v1h-2zM697 374h1v1h-1zM698 376h2v2h-2zM699 377h1v1h-1zM701 378h2v1h-2zM701 378h2v1h-2zM703 381h2v2h-2zM704 382h2v2h-2zM704 382h2v1h-2zM704 383h2v2h-2zM706 385h2v2h-2zM708 385h2v2h-2zM708 386h2v2h-2zM709 387h2v2h-2zM710 388h2v2h-2zM711 389h2v1h-2zM712 390h1v2h-1zM714 392h1v2h-1zM714 393h1v1h-1zM715 394h1v2h-1zM717 396h2v2h-2zM719 397h1v1h-1zM720 399h1v1h-1zM720 399h2v2h-2zM723 399h2v1h-2zM724 402h2v2h-2zM725 404h2v1h-2zM726 403h1v2h-1zM726 406h1v2h-1zM730 409h2v2h-2zM735 420h2v1h-2zM738 414h2v1h-2zM742 421h2v2h-2zM733 417h2v2h-2zM742 422h2v2h-2zM732 423h1v2h-1zM732 424h2v1h-2zM736 423h2v2h-2zM740 412h1v2h-1zM738 413h2v2h-2zM732 422h2v1h-2zM735 414h1v2h-1zM744 420h2v2h-2zM736 422h2v2h-2zM740 414h2v2h-2zM735 418h2v2h-2zM733 414h2v1h-2zM740 424h2v2h-2zM744 422h2v2h-2zM754 435h1v2h-1zM758 435h1v1h-1zM760 440h1v1h-1zM765 439h1v1h-1zM767 443h1v1h-1zM771 443h1v1h-1zM773 445h1v1h-1zM582 499h2v2h-2zM585 502h1v2h-1zM588 500h2v2h-2zM593 502h2v2h-2zM598 501h1v1h-1zM600 502h2v1h-2zM601 501h1v2h-1zM603 501h1v2h-1zM605 501h2v1h-2zM607 502h1v1h-1zM609 500h2v2h-2zM610 500h2v1h-2zM628 501h2v1h-2zM632 500h1v2h-1zM635 500h1v1h-1zM637 502h2v1h-2zM638 502h1v1h-1zM640 503h2v2h-2zM643 502h1v2h-1zM643 502h2v2h-2zM645 502h2v1h-2zM646 501h1v2h-1zM649 502h1v2h-1zM650 501h2v1h-2zM619 501h1v2h-1zM624 497h2v2h-2zM623 503h2v1h-2zM625 497h2v1h-2zM618 496h2v2h-2zM610 504h2v1h-2zM618 495h2v2h-2zM610 495h2v1h-2zM622 499h2v1h-2zM619 500h2v2h-2zM613 495h2v1h-2zM611 494h2v2h-2zM611 493h2v1h-2zM620 503h2v1h-2zM610 495h1v2h-1zM610 502h1v2h-1zM610 495h1v2h-1zM620 503h2v1h-2zM625 498h2v2h-2zM620 494h2v1h-2zM623 504h2v1h-2zM612 502h2v2h-2zM620 504h1v2h-1zM622 496h1v2h-1zM610 492h1v2h-1zM620 492h1v2h-1zM620 494h2v1h-2zM610 494h2v1h-2zM614 500h2v1h-2zM621 497h1v2h-1zM621 500h2v2h-2zM614 502h2v2h-2zM620 495h2v2h-2zM618 503h1v2h-1zM611 504h2v2h-2zM619 502h2v2h-2zM624 500h1v2h-1zM621 500h2v2h-2zM618 494h1v2h-1zM610 500h1v2h-1zM613 502h1v2h-1zM614 502h2v1h-2zM622 504h2v1h-2zM610 501h2v1h-2zM613 492h2v2h-2zM626 495h2v2h-2zM615 496h2v2h-2zM621 503h2v1h-2zM615 503h2v1h-2zM626 492h1v2h-1zM618 510h1v2h-1zM617 518h1v1h-1zM617 521h2v2h-2zM617 530h2v2h-2zM583 501h1v2h-1zM583 504h1v2h-1zM583 509h2v1h-2zM584 515h2v1h-2zM581 518h2v1h-2zM582 520h2v2h-2zM580 523h2v3h-2zM582 525h2v1h-2zM580 527h2v3h-2zM579 529h1v1h-1zM579 530h1v2h-1zM579 533h1v1h-1zM580 534h2v2h-2zM578 541h2v3h-2zM578 542h2v2h-2zM578 543h1v2h-1zM577 547h2v1h-2zM577 547h2v2h-2zM579 550h1v1h-1zM579 553h1v1h-1zM577 555h2v1h-2zM577 555h1v2h-1zM579 557h1v1h-1zM578 560h1v1h-1zM576 562h1v2h-1zM578 565h2v3h-2zM577 565h2v2h-2zM576 569h2v2h-2zM576 574h1v2h-1zM577 577h2v1h-2zM575 578h1v1h-1zM576 582h2v3h-2zM576 584h2v2h-2zM576 587h2v2h-2zM575 588h2v3h-2zM574 595h1v2h-1zM575 596h2v3h-2zM576 601h1v2h-1zM575 604h2v2h-2zM576 605h2v2h-2zM573 607h1v2h-1zM573 611h2v2h-2zM575 613h2v3h-2zM573 617h2v2h-2zM573 617h1v1h-1zM574 620h1v2h-1zM572 622h2v2h-2zM573 624h2v1h-2zM574 628h2v2h-2zM573 630h2v2h-2zM573 631h1v2h-1zM571 635h1v2h-1zM571 638h2v2h-2zM573 639h2v2h-2zM572 645h2v3h-2zM570 647h1v2h-1zM570 649h2v1h-2zM570 653h2v1h-2zM568 657h1v1h-1zM569 660h2v2h-2zM570 663h1v1h-1zM569 665h2v3h-2zM568 669h2v2h-2zM567 671h1v1h-1zM568 672h1v1h-1zM567 676h2v2h-2zM566 677h1v1h-1zM566 681h2v2h-2zM568 681h1v2h-1zM565 685h2v2h-2zM566 687h2v3h-2zM565 690h1v1h-1zM566 692h1v1h-1zM564 695h2v2h-2zM566 697h1v2h-1zM566 699h2v2h-2zM563 699h2v2h-2zM565 702h2v3h-2zM563 705h2v1h-2zM564 706h2v3h-2zM563 708h2v2h-2zM562 712h2v1h-2zM564 714h2v2h-2zM563 715h2v1h-2zM562 718h1v1h-1zM564 721h2v2h-2zM564 722h2v1h-2zM563 724h1v2h-1zM561 729h2v3h-2zM561 729h1v1h-1zM562 733h2v2h-2zM561 735h2v3h-2zM561 738h2v1h-2zM562 743h1v2h-1zM562 745h2v3h-2zM560 750h2v3h-2zM562 753h2v1h-2zM562 754h2v3h-2zM560 756h2v3h-2zM648 504h2v2h-2zM648 509h2v2h-2zM647 511h1v2h-1zM648 520h1v1h-1zM651 524h1v1h-1zM649 526h1v2h-1zM649 529h1v2h-1zM650 533h1v1h-1zM650 535h2v2h-2zM650 539h2v2h-2zM650 540h2v3h-2zM651 542h1v1h-1zM652 545h2v2h-2zM651 545h2v1h-2zM652 548h1v1h-1zM652 550h1v1h-1zM653 551h2v2h-2zM655 555h2v3h-2zM655 557h1v1h-1zM655 560h2v3h-2zM654 561h1v2h-1zM656 565h2v2h-2zM656 569h2v2h-2zM657 575h1v1h-1zM658 575h2v2h-2zM657 579h2v2h-2zM656 581h2v2h-2zM659 585h2v2h-2zM657 588h2v1h-2zM659 591h2v3h-2zM659 599h1v1h-1zM658 602h1v2h-1zM660 606h2v1h-2zM661 610h1v2h-1zM662 619h2v2h-2zM661 620h2v2h-2zM663 622h2v3h-2zM663 625h1v2h-1zM663 630h2v2h-2zM664 633h1v1h-1zM664 635h2v3h-2zM664 639h2v1h-2zM665 640h2v2h-2zM664 643h2v2h-2zM664 647h2v2h-2zM665 647h2v2h-2zM665 651h2v2h-2zM665 653h2v1h-2zM666 654h2v1h-2zM667 655h2v1h-2zM666 657h2v1h-2zM668 660h2v2h-2zM666 663h2v2h-2zM668 663h2v2h-2zM668 665h2v1h-2zM668 667h1v2h-1zM669 671h2v2h-2zM666 673h1v2h-1zM666 674h2v2h-2zM667 675h2v3h-2zM667 678h2v3h-2zM668 680h2v3h-2zM670 685h2v2h-2zM668 686h2v1h-2zM670 687h1v2h-1zM668 691h1v2h-1zM670 692h1v1h-1zM671 697h2v3h-2zM671 700h2v2h-2zM673 702h2v2h-2zM673 704h1v2h-1zM673 706h1v1h-1zM672 710h1v1h-1zM674 711h1v2h-1zM675 717h1v2h-1zM674 721h2v1h-2zM676 722h2v3h-2zM675 724h2v2h-2zM674 727h2v2h-2zM675 727h1v2h-1zM675 730h2v3h-2zM676 733h1v2h-1zM677 734h1v2h-1zM677 737h2v2h-2zM677 743h1v2h-1zM678 751h2v3h-2zM677 752h2v3h-2zM679 755h2v2h-2zM679 762h2v1h-2zM568 662h1v2h-1zM576 655h2v1h-2zM569 656h2v2h-2zM567 659h2v1h-2zM574 646h2v2h-2zM576 653h2v2h-2zM572 658h2v1h-2zM575 654h2v2h-2zM568 650h2v1h-2zM576 653h2v2h-2zM567 655h2v1h-2zM576 658h1v2h-1zM568 658h2v2h-2zM570 648h2v2h-2zM575 662h1v2h-1zM575 652h2v1h-2zM570 649h1v2h-1zM576 648h1v2h-1zM660 657h2v2h-2zM661 647h1v2h-1zM663 646h1v2h-1zM670 658h2v1h-2zM667 650h2v2h-2zM660 653h2v2h-2zM668 655h2v1h-2zM660 654h1v2h-1zM661 653h2v1h-2zM664 656h1v2h-1zM665 654h2v2h-2zM663 649h2v2h-2zM672 659h2v1h-2zM664 659h2v2h-2zM570 670h2v1h-2zM564 670h2v2h-2zM566 683h1v2h-1zM563 690h1v2h-1zM563 688h2v1h-2zM568 682h2v2h-2zM571 683h2v1h-2zM572 671h1v2h-1zM570 680h2v2h-2zM566 672h2v2h-2zM569 688h2v1h-2zM568 684h2v2h-2zM571 684h2v1h-2zM567 689h2v1h-2zM563 682h2v1h-2zM566 676h2v1h-2zM570 670h1v2h-1zM565 676h1v2h-1zM665 685h2v2h-2zM673 668h2v1h-2zM663 679h1v2h-1zM668 668h2v2h-2zM670 679h1v2h-1zM671 678h2v2h-2zM666 671h2v1h-2zM673 673h2v2h-2zM668 668h3v2h-3zM674 671h2v2h-2zM663 672h2v2h-2zM674 683h3v2h-3zM663 678h2v2h-2zM669 672h2v1h-2zM670 686h2v2h-2zM670 680h1v2h-1zM667 676h2v1h-2zM665 676h3v2h-3zM704 784h2v1h-2zM700 784h1v1h-1zM699 785h1v2h-1zM706 788h1v1h-1zM698 783h2v1h-2zM533 789h1v2h-1zM534 790h2v1h-2z" fill="#43ffa3" clip-path="url(#bodyclip)"/>
<path d="M517 404h2v1h-2zM534 391h1v1h-1zM542 386h1v1h-1zM537 408h1v2h-1zM546 396h1v1h-1zM536 406h1v1h-1zM490 437h1v1h-1zM537 408h1v1h-1zM491 430h2v1h-2zM545 380h1v2h-1zM496 442h1v1h-1zM512 432h1v1h-1zM531 390h1v1h-1zM497 425h2v1h-2zM524 417h2v1h-2zM504 441h2v1h-2zM538 404h1v1h-1zM541 385h1v1h-1zM518 395h2v1h-2zM524 422h1v1h-1zM542 398h1v2h-1zM527 413h1v1h-1zM487 430h1v1h-1zM529 407h2v1h-2zM516 421h1v1h-1zM532 386h1v1h-1zM544 398h1v1h-1zM517 430h1v1h-1zM513 405h2v1h-2zM541 393h1v1h-1zM542 399h2v1h-2zM536 409h2v1h-2zM519 396h1v1h-1zM494 428h2v1h-2zM532 387h1v1h-1zM500 441h2v1h-2zM543 400h1v1h-1zM518 416h1v2h-1zM538 400h1v2h-1zM498 436h2v1h-2zM527 404h1v1h-1zM535 406h1v1h-1zM512 422h2v1h-2zM525 411h1v1h-1zM547 390h1v1h-1zM535 410h1v1h-1zM502 423h2v1h-2zM533 410h2v1h-2zM532 399h1v1h-1zM517 399h2v1h-2zM514 402h1v1h-1zM516 414h1v1h-1zM548 392h1v1h-1zM497 429h1v1h-1zM508 407h1v2h-1zM542 385h1v1h-1zM520 424h1v2h-1zM529 385h1v1h-1zM534 392h1v1h-1zM496 439h2v1h-2zM521 424h1v1h-1zM501 438h1v2h-1zM518 401h1v1h-1zM546 382h1v1h-1zM532 396h1v2h-1zM533 401h1v1h-1zM488 436h1v1h-1zM542 395h1v1h-1zM524 418h1v1h-1zM494 429h1v1h-1zM513 405h1v1h-1zM520 406h2v1h-2zM490 430h1v1h-1zM488 425h1v1h-1zM505 411h1v2h-1zM503 411h1v1h-1zM501 413h1v2h-1zM527 385h1v1h-1zM515 432h1v1h-1zM496 435h1v2h-1zM518 406h1v1h-1zM520 430h1v1h-1zM492 433h1v1h-1zM539 387h1v2h-1zM500 435h1v1h-1zM510 433h1v1h-1zM518 426h1v1h-1zM518 408h1v2h-1zM493 438h1v1h-1zM529 401h1v2h-1zM527 407h1v2h-1zM503 407h2v1h-2zM513 412h1v1h-1zM490 443h1v1h-1zM495 438h1v2h-1zM528 423h2v1h-2zM508 439h1v1h-1zM506 428h2v1h-2zM500 415h1v1h-1zM517 403h2v1h-2zM524 410h1v1h-1zM494 436h1v1h-1zM515 400h2v1h-2zM530 418h2v1h-2zM519 420h1v1h-1zM506 411h1v1h-1zM519 394h2v1h-2zM505 432h1v2h-1zM515 417h1v1h-1zM546 390h1v1h-1zM510 405h1v1h-1zM528 385h1v1h-1zM523 405h1v2h-1zM510 401h1v1h-1zM525 411h1v1h-1zM514 437h2v1h-2zM525 385h2v1h-2zM497 415h1v1h-1zM516 397h1v1h-1zM527 393h2v1h-2zM525 387h1v1h-1zM494 427h1v2h-1zM547 386h2v1h-2zM544 389h2v1h-2zM545 382h2v1h-2zM494 421h1v2h-1zM552 388h1v1h-1zM536 390h1v1h-1zM526 398h1v2h-1zM507 408h1v1h-1zM501 409h1v2h-1zM519 427h1v2h-1zM514 401h2v1h-2zM529 409h1v1h-1zM546 397h2v1h-2zM526 400h2v1h-2zM510 431h1v1h-1zM515 418h2v1h-2zM532 416h2v1h-2zM534 414h1v1h-1zM538 409h1v1h-1zM525 410h2v1h-2zM525 395h1v1h-1zM529 385h2v1h-2zM508 418h1v1h-1zM492 436h2v1h-2zM513 421h2v1h-2zM533 387h1v1h-1zM549 384h1v1h-1zM530 417h2v1h-2zM494 439h1v2h-1zM515 404h1v1h-1zM540 389h1v1h-1zM506 426h1v1h-1zM539 403h2v1h-2zM524 420h1v1h-1zM534 399h1v1h-1zM532 384h1v1h-1zM488 442h1v1h-1zM505 405h1v1h-1zM505 434h1v1h-1zM540 395h2v1h-2zM521 407h1v2h-1zM545 384h1v1h-1zM507 408h2v1h-2zM508 407h1v1h-1zM520 432h1v1h-1zM542 389h1v1h-1zM539 396h2v1h-2zM544 399h1v1h-1zM517 403h1v1h-1zM506 430h2v1h-2zM525 398h1v1h-1zM543 388h1v1h-1zM510 418h1v1h-1zM509 431h1v2h-1zM511 438h1v1h-1zM494 429h1v1h-1zM528 423h1v2h-1zM505 437h1v1h-1zM491 439h2v1h-2zM504 424h1v2h-1zM527 406h2v1h-2zM506 429h1v1h-1zM522 392h1v1h-1zM500 420h2v1h-2zM535 411h1v1h-1zM494 424h1v1h-1zM521 420h2v1h-2zM525 407h1v1h-1zM493 433h2v1h-2zM505 433h1v1h-1zM491 441h1v2h-1zM540 389h1v1h-1zM502 416h1v1h-1zM527 399h1v1h-1zM545 398h1v1h-1zM509 403h2v1h-2zM511 424h1v1h-1zM505 422h1v1h-1zM490 434h1v1h-1zM535 398h1v1h-1zM539 402h1v2h-1zM526 426h1v1h-1zM520 405h1v1h-1zM527 418h2v1h-2zM529 398h1v2h-1zM521 388h1v2h-1zM540 388h1v2h-1zM499 426h2v1h-2zM500 433h1v2h-1zM519 413h2v1h-2zM504 415h1v1h-1zM502 423h1v2h-1zM517 411h1v1h-1zM513 437h1v2h-1zM496 415h2v1h-2zM529 399h1v1h-1zM514 410h2v1h-2zM506 416h1v1h-1zM498 431h1v2h-1zM526 385h1v2h-1zM511 411h1v1h-1zM533 390h1v2h-1zM528 398h2v1h-2zM498 425h1v2h-1zM508 418h1v1h-1zM526 404h1v2h-1zM501 414h1v2h-1zM508 424h1v1h-1zM510 416h2v1h-2zM522 390h1v1h-1zM492 432h1v1h-1zM521 418h1v1h-1zM511 400h1v1h-1zM501 412h2v1h-2zM540 392h2v1h-2zM492 432h1v2h-1zM506 425h2v1h-2zM503 423h2v1h-2zM518 396h1v1h-1zM498 441h1v2h-1zM540 395h1v1h-1zM531 408h1v1h-1zM546 383h1v1h-1zM492 435h1v1h-1zM528 389h2v1h-2zM496 432h2v1h-2zM495 443h1v2h-1zM517 397h1v1h-1zM527 391h1v2h-1zM549 393h1v1h-1zM528 384h1v1h-1zM507 407h1v1h-1zM544 389h1v1h-1zM514 428h1v1h-1zM511 430h1v1h-1zM522 424h2v1h-2zM517 412h2v1h-2zM541 386h1v1h-1zM519 390h1v2h-1zM518 402h1v1h-1zM523 386h1v2h-1zM494 439h1v2h-1zM527 408h1v1h-1zM514 412h2v1h-2zM507 424h1v2h-1zM521 398h1v2h-1zM542 400h1v1h-1zM505 411h1v1h-1zM500 426h1v1h-1zM531 388h2v1h-2zM511 417h1v1h-1zM502 425h2v1h-2zM488 431h1v2h-1zM523 413h1v1h-1zM534 415h2v1h-2zM537 382h2v1h-2zM513 435h2v1h-2zM532 389h2v1h-2zM512 407h1v2h-1zM518 424h1v1h-1zM538 382h1v2h-1zM515 421h2v1h-2zM546 391h1v1h-1zM548 391h2v1h-2zM511 412h1v2h-1zM539 397h2v1h-2zM506 423h2v1h-2zM509 426h1v1h-1zM533 392h2v1h-2zM528 394h1v1h-1zM510 404h1v1h-1zM515 415h1v1h-1zM511 408h1v1h-1zM497 443h1v2h-1zM513 434h2v1h-2zM500 420h1v2h-1zM516 432h1v1h-1zM528 408h1v2h-1zM490 444h2v1h-2zM515 400h1v2h-1zM535 398h1v1h-1zM497 417h1v2h-1zM523 422h2v1h-2zM549 392h2v1h-2zM523 404h1v1h-1zM528 413h2v1h-2zM496 425h1v1h-1zM527 395h2v1h-2zM500 421h1v1h-1zM539 380h2v1h-2zM514 429h1v1h-1zM506 403h1v2h-1zM519 407h1v1h-1zM544 399h2v1h-2zM534 406h2v1h-2zM537 383h1v2h-1zM508 401h2v1h-2zM526 415h1v1h-1zM547 392h1v1h-1zM521 417h2v1h-2zM511 406h1v2h-1zM526 394h2v1h-2zM490 443h1v1h-1zM515 434h1v1h-1zM516 401h1v1h-1zM526 421h1v1h-1zM502 421h2v1h-2zM523 413h2v1h-2zM522 407h2v1h-2zM497 439h1v1h-1zM511 406h2v1h-2zM517 395h2v1h-2zM536 383h1v1h-1zM512 398h2v1h-2zM505 432h1v1h-1zM512 403h1v1h-1zM531 390h2v1h-2zM521 422h1v1h-1zM534 405h2v1h-2zM524 410h1v1h-1zM523 390h1v2h-1zM541 402h1v1h-1zM505 430h1v1h-1zM526 406h1v2h-1zM535 413h1v1h-1zM510 434h1v2h-1zM511 434h1v1h-1zM541 405h2v1h-2zM515 400h2v1h-2zM533 391h1v2h-1zM525 397h2v1h-2zM517 404h1v1h-1zM518 410h1v1h-1zM509 410h1v1h-1zM514 425h1v1h-1zM538 392h1v1h-1zM528 391h1v2h-1zM514 404h2v1h-2zM724 428h1v2h-1zM703 415h1v2h-1zM731 431h1v2h-1zM710 398h1v2h-1zM731 417h1v1h-1zM691 382h1v1h-1zM712 415h1v1h-1zM689 387h1v1h-1zM725 440h1v2h-1zM690 391h1v2h-1zM731 425h1v1h-1zM716 437h1v2h-1zM708 401h1v1h-1zM731 425h2v1h-2zM709 406h1v1h-1zM685 380h1v2h-1zM713 432h1v1h-1zM688 389h1v2h-1zM684 393h2v1h-2zM728 432h2v1h-2zM705 416h1v1h-1zM727 415h1v1h-1zM689 388h1v2h-1zM712 399h1v2h-1zM733 417h2v1h-2zM685 388h1v2h-1zM718 405h2v1h-2zM712 415h2v1h-2zM706 428h2v1h-2zM701 393h1v1h-1zM676 386h2v1h-2zM708 400h1v2h-1zM688 399h1v2h-1zM725 426h1v2h-1zM700 423h2v1h-2zM726 427h1v2h-1zM718 435h1v1h-1zM684 398h2v1h-2zM735 418h2v1h-2zM697 397h1v1h-1zM703 418h2v1h-2zM709 402h1v2h-1zM703 424h1v2h-1zM687 405h1v2h-1zM707 406h1v1h-1zM728 440h1v1h-1zM711 403h1v1h-1zM719 427h1v1h-1zM699 387h2v1h-2zM712 417h1v1h-1zM739 423h1v1h-1zM707 409h2v1h-2zM732 433h1v2h-1zM689 398h1v1h-1zM706 392h1v1h-1zM692 402h1v2h-1zM717 400h2v1h-2zM732 437h1v1h-1zM697 383h1v1h-1zM736 428h1v1h-1zM692 382h1v2h-1zM705 419h2v1h-2zM737 429h1v2h-1zM700 404h2v1h-2zM687 383h1v2h-1zM737 439h2v1h-2zM724 409h1v2h-1zM730 440h1v1h-1zM728 411h1v1h-1zM719 435h1v2h-1zM705 427h1v1h-1zM730 434h1v1h-1zM696 409h1v1h-1zM693 388h1v1h-1zM731 442h1v2h-1zM711 423h1v1h-1zM690 396h1v1h-1zM680 391h1v2h-1zM702 395h2v1h-2zM687 399h1v2h-1zM691 399h2v1h-2zM698 393h2v1h-2zM694 407h1v1h-1zM690 401h2v1h-2zM688 387h2v1h-2zM695 402h1v1h-1zM691 407h1v2h-1zM718 401h1v1h-1zM730 420h1v2h-1zM712 429h2v1h-2zM716 432h2v1h-2zM713 424h1v1h-1zM723 419h1v2h-1zM690 386h1v2h-1zM694 415h1v2h-1zM711 417h1v2h-1zM697 408h1v1h-1zM738 423h1v1h-1zM734 428h1v1h-1zM686 387h1v1h-1zM714 424h1v1h-1zM728 423h1v2h-1zM730 422h1v2h-1zM688 404h1v1h-1zM727 420h1v2h-1zM696 406h1v2h-1zM717 408h1v2h-1zM738 441h1v1h-1zM681 396h1v1h-1zM719 414h1v1h-1zM702 406h1v2h-1zM713 432h1v2h-1zM684 381h1v1h-1zM697 402h1v1h-1zM716 430h1v1h-1zM690 381h1v1h-1zM710 423h1v2h-1zM704 410h1v1h-1zM699 414h2v1h-2zM705 388h2v1h-2zM730 423h2v1h-2zM703 414h1v1h-1zM719 437h2v1h-2zM724 416h1v2h-1zM702 417h1v2h-1zM700 415h1v2h-1zM693 398h1v2h-1zM727 410h1v2h-1zM711 419h2v1h-2zM717 405h2v1h-2zM708 419h1v1h-1zM714 412h1v1h-1zM692 403h2v1h-2zM718 429h2v1h-2zM692 407h2v1h-2zM687 406h1v1h-1zM705 392h1v2h-1zM699 405h1v2h-1zM697 388h1v1h-1zM713 403h2v1h-2zM736 419h1v2h-1zM701 420h1v1h-1zM737 438h1v1h-1zM694 389h1v1h-1zM715 422h1v1h-1zM724 435h1v2h-1zM709 419h2v1h-2zM685 402h2v1h-2zM683 386h1v1h-1zM727 410h1v1h-1zM709 393h1v2h-1zM701 402h1v1h-1zM709 392h1v2h-1zM727 422h1v1h-1zM730 429h1v1h-1zM738 438h1v1h-1zM739 429h2v1h-2zM705 390h1v2h-1zM704 416h1v1h-1zM690 382h1v2h-1zM727 414h1v1h-1zM701 418h1v1h-1zM688 391h2v1h-2zM693 382h2v1h-2zM729 429h1v1h-1zM741 426h1v1h-1zM722 414h1v1h-1zM725 439h1v2h-1zM697 391h2v1h-2zM734 417h1v1h-1zM705 406h1v2h-1zM731 425h1v1h-1zM704 399h2v1h-2zM731 436h1v1h-1zM687 377h1v2h-1zM718 403h2v1h-2zM689 408h1v2h-1zM716 402h1v1h-1zM709 408h2v1h-2zM712 409h1v2h-1zM702 397h1v1h-1zM702 418h1v1h-1zM725 415h1v2h-1zM735 426h1v1h-1zM717 402h1v2h-1zM709 393h1v1h-1zM721 434h1v1h-1zM692 398h2v1h-2zM686 403h1v1h-1zM706 413h2v1h-2zM689 381h1v1h-1zM696 409h1v1h-1zM718 434h1v1h-1zM714 408h1v1h-1zM725 421h2v1h-2zM687 401h2v1h-2zM711 411h2v1h-2zM680 386h1v2h-1zM730 419h2v1h-2zM706 397h2v1h-2zM697 390h1v1h-1zM728 435h1v1h-1zM686 378h2v1h-2zM712 416h1v1h-1zM705 427h2v1h-2zM717 434h1v1h-1zM690 408h1v1h-1zM716 428h1v1h-1zM687 388h1v1h-1zM693 411h1v1h-1zM722 420h2v1h-2zM718 414h2v1h-2zM726 421h2v1h-2zM692 385h2v1h-2zM685 400h1v2h-1zM680 381h2v1h-2zM686 393h1v1h-1zM688 393h1v2h-1zM694 396h1v2h-1zM715 414h1v2h-1zM718 437h1v2h-1zM684 387h1v2h-1zM716 405h2v1h-2zM731 415h2v1h-2zM705 404h1v1h-1zM703 419h1v1h-1zM726 411h2v1h-2zM713 425h2v1h-2zM733 435h2v1h-2zM716 399h1v1h-1zM704 410h2v1h-2zM719 425h1v1h-1zM718 418h2v1h-2zM715 404h1v1h-1zM708 418h2v1h-2zM678 385h2v1h-2zM723 408h1v1h-1zM719 429h1v1h-1zM712 408h1v1h-1zM707 420h1v1h-1zM693 385h1v2h-1zM718 436h2v1h-2zM685 379h1v1h-1zM727 428h2v1h-2zM691 392h2v1h-2zM721 416h1v1h-1zM708 406h1v1h-1zM701 385h1v1h-1zM688 405h1v1h-1zM730 416h1v2h-1zM716 424h1v2h-1zM687 388h1v2h-1zM735 436h1v2h-1zM687 396h2v1h-2zM705 407h1v2h-1zM725 440h1v2h-1zM693 402h1v1h-1zM719 418h1v1h-1zM691 401h2v1h-2zM727 417h1v1h-1zM708 401h1v1h-1zM706 417h1v1h-1zM731 421h1v1h-1zM711 419h2v1h-2zM677 384h1v1h-1zM686 391h2v1h-2zM685 398h1v1h-1zM703 398h2v1h-2zM718 426h1v1h-1zM719 431h1v1h-1zM700 414h1v1h-1zM700 419h1v2h-1zM704 415h1v1h-1zM718 425h1v1h-1zM727 425h1v1h-1zM686 388h1v1h-1zM681 387h1v1h-1zM709 420h1v1h-1zM718 434h1v1h-1zM691 385h1v1h-1zM703 392h1v1h-1zM708 422h1v2h-1zM706 417h1v1h-1zM721 417h2v1h-2zM735 434h1v1h-1zM689 397h1v2h-1zM710 401h2v1h-2zM707 424h1v2h-1zM695 393h2v1h-2zM694 394h1v1h-1zM696 402h1v1h-1zM698 394h1v2h-1zM719 416h1v1h-1zM678 388h1v1h-1zM722 426h1v2h-1zM701 403h1v1h-1zM725 432h1v1h-1zM730 436h1v1h-1zM729 428h2v1h-2zM713 431h2v1h-2zM732 439h2v1h-2zM714 414h1v1h-1zM737 437h1v1h-1zM684 397h1v2h-1zM731 420h1v2h-1zM711 395h2v1h-2zM715 417h1v2h-1zM694 392h1v1h-1zM726 418h1v2h-1zM705 418h1v1h-1zM722 429h1v2h-1zM711 424h2v1h-2zM700 411h1v1h-1zM709 398h1v2h-1zM689 402h1v2h-1zM684 391h1v1h-1zM720 439h1v1h-1zM736 423h2v1h-2zM691 382h1v1h-1zM694 404h1v2h-1zM725 409h1v1h-1zM696 406h1v1h-1zM719 415h2v1h-2zM704 425h2v1h-2zM707 390h1v1h-1zM696 389h2v1h-2zM733 417h1v2h-1zM698 399h1v1h-1zM710 427h1v1h-1zM683 386h1v2h-1zM695 404h1v1h-1zM704 406h1v1h-1zM687 380h1v1h-1zM735 433h2v1h-2zM686 391h1v2h-1zM717 421h1v1h-1zM702 403h1v1h-1zM684 398h2v1h-2zM708 402h1v1h-1zM698 401h1v2h-1zM679 390h1v1h-1zM703 398h1v1h-1zM685 389h2v1h-2zM707 424h1v2h-1zM720 436h1v1h-1zM722 431h1v2h-1zM723 430h1v1h-1zM738 435h1v1h-1zM707 392h1v1h-1zM703 425h1v2h-1zM705 421h2v1h-2zM707 393h2v1h-2zM722 407h2v1h-2zM684 379h1v1h-1zM713 419h1v2h-1zM708 414h1v1h-1zM723 422h1v1h-1zM688 390h1v1h-1zM737 438h1v2h-1zM737 426h1v1h-1zM566 414h1v2h-1zM652 355h1v1h-1zM568 418h1v1h-1zM559 384h1v1h-1zM632 353h1v1h-1zM654 356h1v2h-1zM658 387h1v1h-1zM654 414h1v1h-1zM670 394h1v2h-1zM663 417h1v1h-1zM666 409h2v1h-2zM617 345h1v1h-1zM645 363h2v1h-2zM672 388h1v2h-1zM584 355h2v1h-2zM652 369h1v1h-1zM594 348h2v1h-2zM571 419h1v1h-1zM627 439h1v2h-1zM569 418h1v2h-1zM659 404h1v1h-1zM667 408h2v1h-2zM612 343h1v1h-1zM642 353h2v1h-2zM657 420h1v1h-1zM592 344h1v1h-1zM590 444h1v1h-1zM669 404h1v1h-1zM655 434h1v2h-1zM602 440h1v1h-1zM614 440h1v2h-1zM656 420h2v1h-2zM563 376h1v2h-1zM655 360h1v2h-1zM601 444h1v1h-1zM613 439h2v1h-2zM573 361h1v2h-1zM625 353h1v2h-1zM608 348h2v1h-2zM562 400h1v1h-1zM579 427h2v1h-2zM641 440h2v1h-2zM672 390h1v2h-1zM623 350h1v2h-1zM608 345h2v1h-2zM573 379h1v1h-1zM657 366h2v1h-2zM573 424h1v2h-1zM651 367h1v1h-1zM602 349h1v1h-1zM670 382h1v2h-1zM666 393h2v1h-2zM602 446h2v1h-2zM570 370h1v2h-1zM629 447h1v2h-1zM569 400h2v1h-2zM604 448h2v1h-2zM653 419h2v1h-2zM572 429h1v2h-1zM633 349h1v2h-1zM429 467h1v2h-1zM479 444h1v1h-1zM478 441h2v1h-2zM430 475h2v1h-2zM457 459h1v2h-1zM467 462h1v2h-1zM450 446h2v1h-2zM432 463h1v1h-1zM443 456h1v1h-1zM434 479h1v2h-1zM431 464h2v1h-2zM465 453h1v1h-1zM443 453h1v2h-1zM445 460h1v1h-1zM446 451h1v2h-1zM450 458h2v1h-2zM471 444h2v1h-2zM464 448h1v2h-1zM456 440h1v1h-1zM446 452h1v1h-1zM454 462h2v1h-2zM442 472h2v1h-2zM444 458h1v2h-1zM431 481h1v2h-1zM477 449h1v2h-1zM443 479h1v2h-1zM443 456h1v1h-1zM430 475h1v2h-1zM456 459h1v2h-1zM422 478h1v2h-1zM468 446h2v1h-2zM444 478h2v1h-2zM465 450h1v1h-1zM434 461h1v2h-1zM450 466h1v2h-1zM447 450h1v1h-1zM448 476h1v1h-1zM428 479h2v1h-2zM466 435h2v1h-2zM456 462h2v1h-2zM781 466h1v2h-1zM760 428h1v1h-1zM792 473h1v1h-1zM749 441h1v1h-1zM774 452h2v1h-2zM779 467h1v1h-1zM781 464h2v1h-2zM754 434h2v1h-2zM761 455h1v1h-1zM790 460h1v1h-1zM789 453h2v1h-2zM774 462h2v1h-2zM779 459h2v1h-2zM748 430h2v1h-2zM763 436h1v2h-1zM745 424h2v1h-2zM773 445h2v1h-2zM783 451h1v2h-1zM776 454h1v1h-1zM784 456h1v1h-1zM786 453h1v1h-1zM762 447h1v1h-1zM766 449h1v1h-1zM748 438h2v1h-2zM753 422h2v1h-2zM795 458h2v1h-2zM760 452h2v1h-2zM767 453h2v1h-2zM766 463h1v1h-1zM751 425h1v1h-1zM779 461h1v2h-1zM792 465h1v2h-1zM788 474h2v1h-2zM758 428h2v1h-2zM795 467h2v1h-2zM752 425h1v1h-1zM751 448h1v2h-1zM752 437h1v2h-1zM752 442h1v2h-1zM791 470h2v1h-2zM586 301h1v2h-1zM563 303h1v2h-1zM574 300h1v2h-1zM570 293h2v1h-2zM583 297h2v1h-2zM582 312h1v2h-1zM565 289h1v2h-1zM585 302h1v2h-1zM565 293h1v2h-1zM573 309h1v2h-1zM586 295h1v2h-1zM586 286h1v1h-1zM577 312h2v1h-2zM580 303h2v1h-2zM572 298h1v1h-1zM579 309h1v2h-1zM583 312h2v1h-2zM571 293h2v1h-2zM567 304h1v1h-1zM579 311h1v1h-1zM569 288h1v2h-1zM573 284h1v2h-1zM572 293h2v1h-2zM577 286h1v1h-1zM568 300h1v1h-1zM581 292h2v1h-2zM580 305h1v1h-1zM588 287h1v2h-1zM572 286h1v1h-1zM565 306h1v1h-1zM587 312h1v2h-1zM563 303h2v1h-2zM588 291h1v2h-1zM581 293h1v1h-1zM588 296h1v1h-1zM577 285h1v1h-1zM573 291h1v1h-1zM587 308h1v2h-1zM563 302h1v1h-1zM575 304h1v1h-1zM664 305h2v1h-2zM661 299h1v1h-1zM652 299h1v1h-1zM652 311h1v2h-1zM660 306h1v2h-1zM645 285h2v1h-2zM668 303h1v2h-1zM646 302h1v2h-1zM655 307h1v2h-1zM657 292h2v1h-2zM646 300h1v1h-1zM654 284h2v1h-2zM656 305h1v2h-1zM644 290h1v2h-1zM656 306h1v2h-1zM662 302h1v1h-1zM654 312h1v2h-1zM662 298h1v1h-1zM656 284h1v1h-1zM661 297h1v1h-1zM663 292h2v1h-2zM650 293h2v1h-2zM646 299h2v1h-2zM654 291h1v2h-1zM649 295h1v2h-1zM662 300h2v1h-2zM645 308h1v2h-1zM649 310h2v1h-2zM656 312h1v1h-1zM665 311h2v1h-2zM662 288h2v1h-2zM665 303h2v1h-2zM654 295h2v1h-2zM654 308h1v2h-1zM653 312h2v1h-2zM656 308h2v1h-2zM645 312h2v1h-2zM644 284h1v1h-1zM646 294h2v1h-2zM645 305h2v1h-2zM597 322h1v2h-1zM586 325h1v1h-1zM574 339h1v1h-1zM575 326h1v1h-1zM560 342h1v2h-1zM571 326h1v1h-1zM585 322h1v1h-1zM536 335h1v1h-1zM540 320h2v1h-2zM588 338h1v2h-1zM552 337h1v2h-1zM543 342h1v1h-1zM554 323h1v1h-1zM564 320h1v1h-1zM544 324h1v1h-1zM556 319h1v1h-1zM570 322h1v1h-1zM554 339h1v1h-1zM545 330h1v2h-1zM572 321h1v1h-1zM570 343h2v1h-2zM539 319h1v1h-1zM550 334h1v2h-1zM559 330h2v1h-2zM561 343h1v2h-1zM548 322h1v1h-1zM538 336h2v1h-2zM566 323h1v2h-1zM537 324h2v1h-2zM539 333h1v2h-1zM680 340h2v1h-2zM635 323h1v2h-1zM680 334h1v1h-1zM687 338h1v2h-1zM700 332h2v1h-2zM638 324h1v2h-1zM697 331h1v1h-1zM676 343h2v1h-2zM637 325h2v1h-2zM661 339h2v1h-2zM662 345h1v2h-1zM650 320h1v2h-1zM661 341h1v1h-1zM683 332h1v1h-1zM697 338h1v1h-1zM678 345h1v1h-1zM637 336h1v1h-1zM685 345h2v1h-2zM652 342h1v2h-1zM651 343h1v1h-1zM650 324h1v1h-1zM667 340h1v2h-1zM666 333h2v1h-2zM685 320h2v1h-2zM641 318h1v2h-1zM674 335h1v1h-1zM670 331h1v2h-1zM644 345h1v1h-1zM699 336h1v1h-1zM677 334h1v1h-1zM498 352h1v1h-1zM533 348h1v2h-1zM524 353h2v1h-2zM534 330h1v1h-1zM533 337h1v1h-1zM494 346h1v1h-1zM494 368h1v2h-1zM547 371h1v2h-1zM510 333h1v2h-1zM494 354h1v2h-1zM504 381h1v1h-1zM491 391h1v2h-1zM527 336h1v2h-1zM503 340h1v1h-1zM483 380h1v1h-1zM510 399h1v2h-1zM525 362h1v2h-1zM483 389h2v1h-2zM535 368h1v2h-1zM528 337h1v2h-1zM530 341h2v1h-2zM496 343h2v1h-2zM544 365h2v1h-2zM481 378h1v1h-1zM505 361h1v2h-1zM509 332h1v2h-1zM504 352h2v1h-2zM525 345h1v1h-1zM491 342h2v1h-2zM488 387h1v1h-1zM484 354h1v2h-1zM521 370h1v1h-1zM481 340h1v1h-1zM546 380h1v2h-1zM547 383h1v1h-1zM524 357h2v1h-2zM503 372h1v2h-1zM536 383h2v1h-2zM495 359h1v1h-1zM515 352h2v1h-2zM526 400h2v1h-2zM537 393h1v1h-1zM480 369h1v1h-1zM485 381h1v2h-1zM523 363h2v1h-2zM498 397h2v1h-2zM533 397h1v1h-1zM547 375h1v1h-1zM542 372h2v1h-2zM523 334h1v2h-1zM507 346h1v2h-1zM538 337h1v1h-1zM503 378h1v2h-1zM497 385h2v1h-2zM487 362h1v1h-1zM507 360h1v2h-1zM521 331h1v2h-1zM493 392h2v1h-2zM522 331h1v2h-1zM525 382h1v2h-1zM746 372h1v1h-1zM727 353h1v1h-1zM725 392h2v1h-2zM747 345h2v1h-2zM712 331h1v2h-1zM746 344h2v1h-2zM760 381h1v2h-1zM747 339h1v1h-1zM729 396h1v2h-1zM705 335h2v1h-2zM708 364h2v1h-2zM730 352h1v1h-1zM718 370h2v1h-2zM760 372h1v1h-1zM714 341h2v1h-2zM725 343h1v1h-1zM757 361h1v1h-1zM745 383h1v1h-1zM707 345h2v1h-2zM715 383h1v2h-1zM757 346h1v1h-1zM720 347h1v1h-1zM744 333h1v1h-1zM741 356h1v2h-1zM716 354h2v1h-2zM743 396h1v1h-1zM751 336h2v1h-2zM684 336h2v1h-2zM697 347h1v2h-1zM706 385h1v1h-1zM691 362h1v1h-1zM758 393h2v1h-2zM728 343h2v1h-2zM727 338h1v2h-1zM691 395h1v2h-1zM714 337h1v2h-1zM729 358h1v1h-1zM694 367h2v1h-2zM744 345h1v1h-1zM755 344h2v1h-2zM741 363h2v1h-2zM729 400h2v1h-2zM716 387h1v2h-1zM739 359h2v1h-2zM727 337h2v1h-2zM722 357h1v1h-1zM685 352h1v2h-1zM719 349h2v1h-2zM742 338h1v2h-1zM725 347h2v1h-2zM700 385h2v1h-2zM732 397h1v1h-1zM751 396h2v1h-2zM697 337h1v2h-1zM755 341h2v1h-2zM741 332h1v1h-1zM700 332h1v1h-1zM754 364h1v2h-1zM705 359h1v2h-1zM744 330h2v1h-2zM560 502h1v2h-1zM669 540h1v1h-1zM607 523h1v2h-1zM621 482h1v2h-1zM585 547h1v2h-1zM656 560h1v1h-1zM643 540h2v1h-2zM570 459h1v1h-1zM596 474h2v1h-2zM657 529h1v2h-1zM606 447h1v2h-1zM584 540h1v2h-1zM563 481h1v2h-1zM649 512h1v1h-1zM647 550h2v1h-2zM629 517h1v2h-1zM650 480h2v1h-2zM594 527h1v2h-1zM671 441h2v1h-2zM576 507h1v2h-1zM617 488h2v1h-2zM652 476h2v1h-2zM606 518h1v2h-1zM616 459h2v1h-2zM585 504h1v1h-1zM649 459h2v1h-2zM676 443h2v1h-2zM605 521h1v2h-1zM660 451h2v1h-2zM582 515h2v1h-2zM596 443h1v1h-1zM587 528h2v1h-2zM676 523h1v1h-1zM578 469h2v1h-2zM573 474h1v2h-1zM597 528h2v1h-2zM622 458h2v1h-2zM635 525h1v1h-1zM609 524h1v2h-1zM617 508h2v1h-2zM675 489h2v1h-2zM638 548h1v1h-1zM585 502h1v2h-1zM634 440h2v1h-2zM661 461h2v1h-2zM595 618h2v1h-2zM547 640h2v1h-2zM554 610h2v1h-2zM580 597h1v1h-1zM567 635h2v1h-2zM536 606h1v1h-1zM584 616h1v2h-1zM606 627h1v1h-1zM606 563h2v1h-2zM559 621h2v1h-2zM549 606h1v2h-1zM528 639h1v1h-1zM558 601h2v1h-2zM531 649h2v1h-2zM595 602h2v1h-2zM574 635h2v1h-2zM539 620h1v1h-1zM571 593h2v1h-2zM567 650h1v1h-1zM588 609h2v1h-2zM587 599h1v1h-1zM521 646h2v1h-2zM592 648h1v2h-1zM540 614h2v1h-2zM592 622h1v2h-1zM546 608h2v1h-2zM520 648h1v1h-1zM597 633h1v2h-1zM556 626h1v2h-1zM547 606h1v2h-1zM525 617h1v1h-1zM544 629h1v2h-1zM547 637h1v2h-1zM566 622h2v1h-2zM582 640h1v2h-1zM568 638h1v2h-1zM603 601h1v2h-1zM544 607h2v1h-2zM594 642h1v1h-1zM555 589h1v1h-1zM604 609h2v1h-2zM569 617h1v1h-1zM566 613h2v1h-2zM539 612h1v2h-1zM591 625h2v1h-2zM537 608h1v1h-1zM602 624h1v2h-1zM565 650h1v1h-1zM526 629h1v2h-1zM553 637h2v1h-2zM544 642h1v1h-1zM594 613h1v2h-1zM606 614h2v1h-2zM598 633h1v1h-1zM572 636h1v2h-1zM540 612h1v1h-1zM552 573h1v1h-1zM558 594h1v2h-1zM542 617h2v1h-2zM529 641h1v2h-1zM574 634h1v1h-1zM539 648h2v1h-2zM601 618h1v2h-1zM584 643h2v1h-2zM558 611h1v2h-1zM564 604h2v1h-2zM544 643h2v1h-2zM534 634h1v1h-1zM534 639h1v1h-1zM550 642h1v1h-1zM562 595h2v1h-2zM545 618h2v1h-2zM531 610h1v2h-1zM558 627h1v1h-1zM544 648h2v1h-2zM583 593h2v1h-2zM551 623h1v1h-1zM590 569h1v1h-1zM607 620h2v1h-2zM552 617h1v2h-1zM605 634h1v1h-1zM544 617h1v1h-1zM535 631h1v1h-1zM547 639h1v2h-1zM540 647h1v1h-1zM542 629h2v1h-2zM579 624h1v2h-1zM552 606h1v1h-1zM541 619h1v1h-1zM606 621h1v1h-1zM596 630h2v1h-2zM536 608h1v1h-1zM524 592h1v1h-1zM541 599h1v2h-1zM549 648h1v2h-1zM533 606h1v1h-1zM573 624h1v1h-1zM600 597h1v1h-1zM568 631h1v2h-1zM577 643h1v2h-1zM532 610h1v2h-1zM574 637h2v1h-2zM597 601h1v2h-1zM558 647h1v2h-1zM539 640h2v1h-2zM536 627h1v2h-1zM532 600h1v2h-1zM599 595h1v2h-1zM584 618h2v1h-2zM581 632h2v1h-2zM545 629h1v1h-1zM578 647h1v1h-1zM605 644h2v1h-2zM580 647h2v1h-2zM609 643h2v1h-2zM572 650h1v1h-1zM541 644h1v1h-1zM590 620h2v1h-2zM600 626h1v2h-1zM543 639h1v2h-1zM587 625h1v1h-1zM533 639h2v1h-2zM557 611h1v1h-1zM570 601h2v1h-2zM564 626h1v2h-1zM609 646h2v1h-2zM526 638h2v1h-2zM596 598h2v1h-2zM529 607h2v1h-2zM562 648h2v1h-2zM598 650h1v2h-1zM595 619h1v1h-1zM596 614h1v2h-1zM579 613h1v2h-1zM607 632h1v2h-1zM560 646h1v2h-1zM531 642h2v1h-2zM553 618h2v1h-2zM547 614h1v1h-1zM526 632h2v1h-2zM570 642h1v2h-1zM607 647h2v1h-2zM590 605h1v2h-1zM538 608h2v1h-2zM530 632h2v1h-2zM565 622h2v1h-2zM562 627h2v1h-2zM572 646h2v1h-2zM576 616h1v2h-1zM528 611h1v1h-1zM549 614h1v1h-1zM547 592h1v1h-1zM573 635h2v1h-2zM603 605h1v2h-1zM550 614h1v2h-1zM584 583h2v1h-2zM569 620h2v1h-2zM529 636h2v1h-2zM569 619h1v2h-1zM540 611h1v2h-1zM603 619h2v1h-2zM534 641h2v1h-2zM543 613h1v2h-1zM571 621h2v1h-2zM576 622h1v1h-1zM588 624h1v1h-1zM559 611h2v1h-2zM554 626h2v1h-2zM557 616h1v2h-1zM600 570h2v1h-2zM641 588h1v1h-1zM674 622h2v1h-2zM636 616h1v2h-1zM640 621h1v1h-1zM683 610h1v1h-1zM633 642h1v2h-1zM669 593h2v1h-2zM672 646h2v1h-2zM675 604h1v2h-1zM716 616h2v1h-2zM692 606h1v2h-1zM675 646h1v1h-1zM682 629h2v1h-2zM700 610h1v1h-1zM639 642h1v2h-1zM633 598h1v1h-1zM695 650h1v2h-1zM629 612h2v1h-2zM704 624h2v1h-2zM687 614h1v1h-1zM688 611h2v1h-2zM705 639h1v2h-1zM714 611h1v1h-1zM689 619h2v1h-2zM717 620h1v2h-1zM656 642h1v1h-1zM641 615h1v1h-1zM631 646h2v1h-2zM631 645h2v1h-2zM708 637h1v1h-1zM638 628h2v1h-2zM691 620h1v2h-1zM638 619h1v1h-1zM650 611h2v1h-2zM644 624h1v2h-1zM682 602h1v2h-1zM633 627h1v2h-1zM642 624h1v2h-1zM697 608h1v1h-1zM647 606h1v1h-1zM646 593h1v2h-1zM716 647h1v1h-1zM698 614h2v1h-2zM711 624h1v2h-1zM635 618h1v2h-1zM708 647h2v1h-2zM672 608h1v2h-1zM666 629h1v1h-1zM710 623h2v1h-2zM664 592h1v1h-1zM654 596h1v2h-1zM663 625h2v1h-2zM675 597h1v1h-1zM713 616h1v2h-1zM661 629h1v1h-1zM678 612h2v1h-2zM651 628h1v2h-1zM642 637h1v1h-1zM647 624h2v1h-2zM632 642h1v1h-1zM708 605h1v2h-1zM699 608h1v2h-1zM701 649h1v1h-1zM646 600h2v1h-2zM687 627h1v1h-1zM718 562h1v1h-1zM700 628h2v1h-2zM693 614h1v1h-1zM680 613h2v1h-2zM691 634h2v1h-2zM700 644h1v1h-1zM700 646h1v1h-1zM695 636h2v1h-2zM650 612h1v1h-1zM709 604h2v1h-2zM675 648h1v1h-1zM682 637h2v1h-2zM658 645h1v1h-1zM698 630h1v2h-1zM713 621h1v2h-1zM654 638h1v1h-1zM716 631h1v1h-1zM669 615h1v1h-1zM694 604h1v2h-1zM646 596h1v2h-1zM655 612h2v1h-2zM661 611h1v1h-1zM646 562h2v1h-2zM682 607h1v1h-1zM657 584h1v1h-1zM679 643h1v2h-1zM656 628h2v1h-2zM649 629h2v1h-2zM668 649h1v1h-1zM662 612h2v1h-2zM683 642h1v1h-1zM699 619h1v1h-1zM651 649h2v1h-2zM681 615h1v1h-1zM661 641h2v1h-2zM650 599h1v2h-1zM630 625h1v2h-1zM709 592h2v1h-2zM670 613h2v1h-2zM701 650h1v1h-1zM638 650h2v1h-2zM662 619h1v2h-1zM702 643h2v1h-2zM646 629h1v2h-1zM680 574h1v2h-1zM705 635h2v1h-2zM698 599h1v1h-1zM705 621h2v1h-2zM702 626h2v1h-2zM675 648h2v1h-2zM707 629h1v1h-1zM651 632h2v1h-2zM694 629h1v1h-1zM659 636h2v1h-2zM672 642h2v1h-2zM703 632h2v1h-2zM660 620h1v1h-1zM684 649h1v1h-1zM674 641h1v2h-1zM634 643h1v1h-1zM709 614h1v1h-1zM667 619h1v1h-1zM635 637h2v1h-2zM695 607h1v2h-1zM642 595h1v2h-1zM655 610h1v2h-1zM671 615h2v1h-2zM649 607h2v1h-2zM637 632h2v1h-2zM628 628h2v1h-2zM684 626h2v1h-2zM714 598h1v1h-1zM671 583h1v2h-1zM652 633h1v1h-1zM675 629h1v1h-1zM706 630h1v1h-1zM699 613h2v1h-2zM669 639h2v1h-2zM655 622h1v1h-1zM633 620h1v2h-1zM656 612h1v1h-1zM649 647h2v1h-2zM670 602h2v1h-2zM655 636h2v1h-2zM669 628h1v1h-1zM700 613h1v2h-1zM668 606h1v2h-1zM652 609h2v1h-2zM673 607h1v1h-1zM637 630h2v1h-2zM664 595h2v1h-2zM696 613h2v1h-2zM695 630h1v1h-1zM698 621h1v2h-1zM711 625h1v1h-1zM651 649h1v1h-1zM636 596h1v2h-1zM643 630h1v1h-1zM677 607h2v1h-2zM632 645h1v1h-1zM660 645h1v1h-1zM680 598h1v2h-1zM707 639h1v1h-1zM703 612h1v1h-1zM706 635h1v2h-1zM531 583h2v1h-2zM534 565h1v2h-1zM533 602h2v1h-2zM525 595h2v1h-2zM533 585h1v2h-1zM527 593h1v1h-1zM531 578h2v1h-2zM523 616h1v1h-1zM536 565h1v2h-1zM532 589h2v1h-2zM522 623h1v2h-1zM530 598h1v1h-1zM528 591h1v1h-1zM530 586h2v1h-2zM530 577h1v1h-1zM527 606h2v1h-2zM534 563h1v1h-1zM527 586h1v2h-1zM537 583h2v1h-2zM528 594h2v1h-2zM533 574h1v1h-1zM538 571h1v1h-1zM527 605h1v2h-1zM530 600h2v1h-2zM534 596h1v2h-1zM523 612h2v1h-2zM525 600h1v1h-1zM529 595h1v1h-1zM523 622h1v1h-1zM524 618h1v1h-1zM525 617h1v2h-1zM536 557h1v2h-1zM525 607h1v2h-1zM532 591h1v2h-1zM523 623h2v1h-2zM541 568h1v2h-1zM528 586h2v1h-2zM531 590h1v2h-1zM527 610h1v2h-1zM537 570h2v1h-2zM527 622h1v1h-1zM527 623h1v2h-1zM530 606h1v2h-1zM530 591h1v1h-1zM530 575h1v1h-1zM537 576h1v1h-1zM522 630h1v2h-1zM532 601h1v1h-1zM524 615h1v2h-1zM525 609h1v2h-1zM530 605h1v2h-1zM524 615h1v1h-1zM527 585h1v1h-1zM526 607h2v1h-2zM532 606h1v1h-1zM525 621h1v1h-1zM533 570h1v1h-1zM530 598h2v1h-2zM537 566h2v1h-2zM524 599h1v2h-1zM522 631h2v1h-2zM532 602h2v1h-2zM528 602h1v2h-1zM532 570h1v1h-1zM527 628h1v1h-1zM520 623h1v2h-1zM531 583h1v1h-1zM518 628h1v2h-1zM529 607h2v1h-2zM528 587h1v1h-1zM527 597h2v1h-2zM526 600h1v1h-1zM521 626h1v1h-1zM530 594h1v1h-1zM534 567h1v1h-1zM706 582h2v1h-2zM697 573h1v2h-1zM706 596h1v1h-1zM701 594h2v1h-2zM698 580h2v1h-2zM701 599h2v1h-2zM705 612h1v2h-1zM697 562h1v1h-1zM708 623h2v1h-2zM709 613h2v1h-2zM713 609h1v1h-1zM699 563h1v1h-1zM708 630h2v1h-2zM700 598h1v1h-1zM708 610h1v1h-1zM698 580h1v2h-1zM698 585h1v1h-1zM717 629h1v1h-1zM703 600h1v2h-1zM706 605h2v1h-2zM704 589h1v2h-1zM705 595h1v1h-1zM709 631h2v1h-2zM701 576h1v2h-1zM709 633h1v2h-1zM708 591h2v1h-2zM707 606h1v2h-1zM713 610h2v1h-2zM704 584h1v1h-1zM692 567h1v1h-1zM699 572h2v1h-2zM708 587h1v1h-1zM697 574h2v1h-2zM697 583h2v1h-2zM701 583h2v1h-2zM706 623h1v2h-1zM698 593h2v1h-2zM693 561h1v1h-1zM708 619h1v2h-1zM701 603h1v2h-1zM698 572h1v2h-1zM712 621h1v1h-1zM707 627h2v1h-2zM707 595h2v1h-2zM713 615h1v2h-1zM707 586h2v1h-2zM705 586h2v1h-2zM702 584h1v1h-1zM712 610h2v1h-2zM700 583h2v1h-2zM704 578h1v2h-1zM699 569h2v1h-2zM706 583h1v1h-1zM702 604h1v2h-1zM703 578h2v1h-2zM698 571h1v1h-1zM715 613h1v1h-1zM700 569h2v1h-2zM700 579h1v2h-1zM705 622h1v2h-1zM710 597h1v1h-1zM691 563h2v1h-2zM702 575h1v2h-1zM713 619h1v2h-1zM706 598h1v1h-1zM705 620h2v1h-2zM691 559h1v1h-1zM712 626h2v1h-2zM694 566h1v1h-1zM704 613h2v1h-2zM703 601h1v1h-1zM708 609h2v1h-2zM703 570h2v1h-2zM708 591h2v1h-2zM717 622h1v2h-1zM665 638h2v1h-2zM682 635h2v1h-2zM667 620h1v2h-1zM667 621h2v1h-2zM664 631h2v1h-2zM666 637h1v2h-1zM680 634h1v1h-1zM678 635h2v1h-2zM665 641h1v2h-1zM690 612h1v1h-1zM678 641h1v1h-1zM675 640h2v1h-2zM663 626h1v1h-1zM670 637h1v1h-1zM680 629h1v1h-1zM656 613h1v1h-1zM675 632h1v1h-1zM661 629h1v2h-1zM683 630h2v1h-2zM659 636h1v1h-1zM688 632h2v1h-2zM684 626h2v1h-2zM674 639h1v1h-1zM676 639h1v1h-1zM666 617h2v1h-2zM679 622h1v1h-1zM671 617h1v1h-1zM663 625h2v1h-2zM662 635h1v2h-1zM659 635h1v1h-1zM652 646h1v1h-1zM667 623h1v1h-1zM669 627h1v2h-1zM668 624h1v1h-1zM684 635h2v1h-2zM662 645h1v2h-1zM662 634h1v2h-1zM677 638h1v1h-1zM666 639h2v1h-2zM676 636h1v1h-1zM671 640h1v1h-1zM679 625h1v1h-1zM680 640h1v1h-1zM673 628h1v2h-1zM669 638h2v1h-2zM557 619h1v2h-1zM576 613h1v2h-1zM571 623h1v2h-1zM575 625h1v2h-1zM565 623h1v2h-1zM567 624h1v1h-1zM567 638h1v1h-1zM582 627h1v1h-1zM562 632h1v1h-1zM563 619h2v1h-2zM573 634h1v2h-1zM562 622h2v1h-2zM580 630h1v1h-1zM562 633h2v1h-2zM566 620h1v1h-1zM581 627h2v1h-2zM560 625h2v1h-2zM569 621h1v1h-1zM574 640h1v1h-1zM566 642h1v1h-1zM581 622h1v1h-1zM576 641h1v2h-1zM576 626h1v2h-1zM576 626h2v1h-2zM574 624h1v2h-1zM576 635h1v2h-1zM561 626h1v1h-1zM576 619h1v1h-1zM577 639h1v2h-1zM563 626h1v1h-1zM558 637h1v2h-1zM566 643h2v1h-2zM563 631h2v1h-2zM592 641h1v1h-1zM593 668h2v1h-2zM557 634h1v2h-1zM545 649h1v1h-1zM593 651h2v1h-2zM560 658h1v2h-1zM576 668h2v1h-2zM555 651h2v1h-2zM548 635h2v1h-2zM546 668h1v2h-1zM551 658h1v1h-1zM598 639h1v1h-1zM549 643h1v1h-1zM580 677h1v1h-1zM590 665h1v1h-1zM564 674h1v1h-1zM556 642h1v1h-1zM599 639h2v1h-2zM549 665h1v1h-1zM583 672h2v1h-2zM555 675h2v1h-2zM577 639h2v1h-2zM550 640h2v1h-2zM569 664h2v1h-2zM599 667h1v1h-1zM564 652h1v1h-1zM574 665h1v1h-1zM555 673h2v1h-2zM573 671h1v2h-1zM595 668h1v2h-1zM557 678h1v2h-1zM566 635h1v2h-1zM598 636h2v1h-2zM590 642h1v1h-1zM586 652h1v2h-1zM555 663h1v1h-1zM551 662h1v1h-1zM565 662h1v1h-1zM586 631h1v2h-1zM572 642h1v1h-1zM564 640h1v1h-1zM582 660h2v1h-2zM580 642h1v2h-1zM599 651h1v1h-1zM556 662h1v2h-1zM591 639h1v2h-1zM595 636h1v1h-1zM596 638h1v1h-1zM552 645h2v1h-2zM565 656h2v1h-2zM587 642h2v1h-2zM554 667h2v1h-2zM571 654h2v1h-2zM560 630h2v1h-2zM561 677h1v2h-1zM563 673h1v2h-1zM550 658h1v1h-1zM666 677h1v1h-1zM685 645h1v2h-1zM677 673h2v1h-2zM664 664h1v1h-1zM671 656h2v1h-2zM666 632h2v1h-2zM676 655h2v1h-2zM694 659h2v1h-2zM654 668h1v1h-1zM671 660h1v2h-1zM640 664h2v1h-2zM680 659h1v1h-1zM653 639h1v1h-1zM671 678h2v1h-2zM681 649h1v1h-1zM643 650h1v1h-1zM662 636h1v1h-1zM678 638h1v1h-1zM652 664h2v1h-2zM685 635h1v1h-1zM692 661h2v1h-2zM680 655h1v2h-1zM692 645h1v2h-1zM654 669h2v1h-2zM688 646h2v1h-2zM691 633h1v1h-1zM662 673h1v2h-1zM691 665h1v1h-1zM671 633h1v1h-1zM680 632h1v1h-1zM677 644h2v1h-2zM667 668h1v1h-1zM672 680h2v1h-2zM657 661h2v1h-2zM647 645h1v2h-1zM685 675h2v1h-2zM676 667h1v2h-1zM659 663h1v2h-1zM641 669h1v1h-1zM653 672h2v1h-2zM642 645h2v1h-2zM677 659h1v2h-1zM655 671h2v1h-2zM679 667h2v1h-2zM660 680h2v1h-2zM660 652h1v2h-1zM671 640h1v2h-1zM681 649h1v2h-1zM664 662h1v2h-1zM647 645h1v2h-1zM681 676h1v1h-1zM663 659h2v1h-2zM647 631h1v1h-1zM667 670h1v1h-1zM674 638h2v1h-2zM676 656h1v2h-1zM640 646h1v2h-1zM649 655h2v1h-2zM660 632h1v1h-1zM652 644h2v1h-2zM589 729h2v1h-2zM554 690h1v1h-1zM578 766h1v2h-1zM565 712h1v1h-1zM566 696h2v1h-2zM568 728h2v1h-2zM574 710h2v1h-2zM587 716h1v1h-1zM575 684h2v1h-2zM565 716h1v1h-1zM574 756h1v1h-1zM582 739h1v2h-1zM585 731h1v1h-1zM559 703h1v2h-1zM587 702h2v1h-2zM580 732h1v2h-1zM590 717h1v1h-1zM561 745h1v1h-1zM545 738h1v1h-1zM581 714h1v1h-1zM558 745h1v2h-1zM571 745h2v1h-2zM555 699h2v1h-2zM549 737h1v2h-1zM569 754h1v1h-1zM545 729h1v1h-1zM579 704h1v1h-1zM565 747h1v1h-1zM557 741h1v2h-1zM567 684h1v2h-1zM694 724h1v1h-1zM657 710h2v1h-2zM689 724h1v2h-1zM688 760h1v1h-1zM691 686h1v2h-1zM678 757h2v1h-2zM685 734h1v1h-1zM683 724h1v1h-1zM695 762h2v1h-2zM675 747h2v1h-2zM664 746h1v2h-1zM681 741h2v1h-2zM650 687h1v2h-1zM663 753h1v2h-1zM666 739h1v2h-1zM667 694h1v2h-1zM654 733h2v1h-2zM670 729h1v1h-1zM688 757h1v1h-1zM695 725h2v1h-2zM659 695h1v1h-1zM682 761h2v1h-2zM658 735h1v1h-1zM690 713h2v1h-2zM685 731h1v1h-1zM672 737h1v2h-1zM659 756h1v1h-1zM691 765h1v2h-1zM684 709h1v2h-1zM691 768h2v1h-2z" fill="#80786a" clip-path="url(#bodyclip)"/>
<rect x="616" y="555" width="3" height="3" fill="#43ffa3"/>
<polygon points="615.7,567.7 620.8,567.7 622,635 622.600,662 616,662 615.7,635" fill="#43ffa3"/>
<path d="M616.500 660L617.700 806.600M619.800 660L620.800 700L622.700 806M622.300 660L623.500 700L624.200 748L627 806.600M617.700 806H627M618 802.500H626.500" stroke="#43ffa3" stroke-width="1.600" fill="none"/>
<path d="M618.600 636V664M620.800 655V664" stroke="#6a6a5a" stroke-width="1" fill="none"/>
<path d="M834 410q0-4.500 4-4.500h8.500q4 0 4 4.500l-.5 4-3 67v27h-14.5v-27z" fill="#000460"/>
<polygon points="822,512 826,508 856,508 860,512 856,516 826,516" fill="#000460"/>
<polygon points="831.4,516.0 847.0,516.0 848.6,608.0 854.6,660.0 861.4,720.0 872.6,780.0 876.9,801.4 866.6,793.7 861.4,780.0 850.3,728.6 840.0,660.0 835.7,608.0" fill="#000460"/>
<polygon points="831.4,516.0 847.0,516.0 848.6,608.0 854.6,660.0 861.4,720.0 872.6,780.0 876.9,801.4 866.6,793.7 861.4,780.0 850.3,728.6 840.0,660.0 835.7,608.0" fill="none" stroke="#000460" stroke-width="1.6"/>
<path d="M836 516L838 608L845 660L855 728L869 790M841 516L843 608L850 660L859 725L873 795" stroke="#000460" stroke-width="1.2" fill="none"/>
<path d="M905 401q0-5 5-5h5q5 0 5 5v106h-15z" fill="#000460"/>
<ellipse cx="912.5" cy="510.500" rx="22.500" ry="6.500" fill="#000460"/>
<polygon points="906.0,516.0 919.7,516.0 922.3,608.6 929.0,720.0 933.4,762.9 934.3,780.0 928.3,779.0 921.4,771.4 918.9,762.9 914.6,720.0 908.6,608.6" fill="none" stroke="#000460" stroke-width="1.5"/>
<path d="M913.5 516L915.5 608L922 720L928 775M918 516L920.500 608L927 720L932.500 775M906 523H920M906.5 548.600H920.5M908.600 612H922.5M914 682H927M918.5 744H931.5" stroke="#000460" stroke-width="1.200" fill="none"/>
<polygon points="967.0,511.0 984.0,511.0 984.0,625.7 986.6,720.0 992.6,780.0 991.7,789.0 985.0,792.0 978.0,791.0 976.3,780.0 972.0,728.6 967.7,625.7" fill="#000460"/>
<path d="M1013 395q0-5 5-5h5.600q5 0 5 5l-1.600 115.500h-14.600z" fill="#000460"/>
<polygon points="997,509.400 1039.700,512.400 1039.700,515.400 1027,515.400 1025,522 1012.300,522 1010,516 997,511" fill="#000460"/>
<polygon points="1012.3,516.0 1024.3,516.0 1025.0,642.9 1029.4,720.0 1034.6,771.4 1034.6,786.9 1028.0,783.0 1024.3,778.3 1021.7,771.4 1016.6,720.0 1013.0,642.9" fill="#000460"/>
<path d="M1017 471h1v3h-1zM1019 469h2v1h-2zM1023 442h1v2h-1zM1019 486h1v2h-1zM1021 437h1v1h-1zM1016 439h1v1h-1zM1017 467h1v3h-1zM1018 467h1v2h-1zM1021 415h1v3h-1zM1017 504h1v2h-1zM1020 403h2v1h-2zM1016 403h1v3h-1zM1017 468h2v1h-2zM1025 411h2v1h-2zM1022 402h1v3h-1zM1025 501h1v3h-1zM1021 463h1v2h-1zM1023 420h1v1h-1zM1022 469h2v1h-2zM1019 456h2v1h-2zM1017 498h1v2h-1zM1021 485h1v1h-1zM1018 480h2v1h-2zM1017 404h2v1h-2zM1018 425h1v2h-1zM1026 445h1v1h-1zM1026 488h1v1h-1zM1016 401h2v1h-2zM1022 413h1v2h-1zM1023 500h1v3h-1zM1021 401h2v1h-2zM1016 488h1v3h-1zM1024 409h1v1h-1zM1026 502h1v3h-1zM1018 435h1v3h-1zM1019 471h1v3h-1zM1021 481h1v1h-1zM1019 434h2v1h-2zM1024 411h1v1h-1zM1016 496h1v1h-1zM1017 465h2v1h-2zM1018 491h1v3h-1zM1024 468h2v1h-2zM1020 467h2v1h-2zM1024 433h1v1h-1zM1022 483h1v2h-1zM1017 460h1v3h-1zM1024 472h1v1h-1zM1023 457h1v1h-1zM1019 441h2v1h-2zM1023 474h1v1h-1zM1026 456h1v2h-1zM1017 438h1v2h-1zM1025 432h1v1h-1zM1019 475h1v3h-1zM1016 442h1v2h-1zM1024 419h1v3h-1zM1025 437h1v1h-1zM1025 454h2v1h-2zM1023 472h1v3h-1zM1017 478h1v3h-1zM1023 415h1v2h-1zM1018 471h1v3h-1zM1021 416h1v1h-1zM1023 476h1v3h-1zM1022 435h1v2h-1zM1026 427h2v1h-2zM1017 483h1v2h-1zM1024 447h1v3h-1zM1026 401h1v2h-1zM1026 466h1v1h-1zM1026 425h2v1h-2zM1026 503h1v2h-1zM1016 501h2v1h-2zM1024 432h1v3h-1zM1016 458h1v3h-1zM1020 469h1v1h-1zM1017 452h1v2h-1zM1019 429h2v1h-2zM1023 467h2v1h-2zM1020 462h1v2h-1zM1019 446h1v2h-1zM1018 455h2v1h-2zM1021 425h1v1h-1zM1024 401h1v2h-1zM1017 447h2v1h-2zM1020 456h1v3h-1zM1023 401h2v1h-2zM1024 428h2v1h-2zM1021 417h2v1h-2zM1021 440h1v2h-1zM1026 430h1v1h-1zM1016 438h1v1h-1zM1021 505h1v1h-1zM1019 464h2v1h-2zM1021 488h2v1h-2zM1023 495h1v1h-1zM1018 503h2v1h-2zM1020 481h1v1h-1zM1018 419h2v1h-2zM1025 416h1v2h-1zM1024 447h1v3h-1zM1024 496h1v1h-1zM1017 460h1v1h-1zM1017 493h1v2h-1zM1023 422h2v1h-2zM1023 480h1v3h-1zM1023 491h1v3h-1zM1023 480h2v1h-2zM1025 440h1v2h-1zM1019 530h1v3h-1zM1019 535h1v2h-1zM1019 550h1v3h-1zM1019 555h1v3h-1zM1019 560h1v2h-1zM1019 570h1v2h-1zM1019 580h1v3h-1zM1019 585h1v4h-1zM1019 590h1v4h-1zM1019 595h1v4h-1zM1019 600h1v4h-1zM1019 625h1v4h-1zM1019 635h1v4h-1zM1019 640h1v4h-1zM1020 650h1v2h-1zM1020 660h1v2h-1zM1020 665h1v2h-1zM1021 675h1v3h-1zM1021 680h1v2h-1zM1021 685h1v3h-1zM1022 695h1v4h-1zM1022 700h1v4h-1zM1022 705h1v3h-1zM1023 715h1v2h-1zM1023 725h1v2h-1zM1024 730h1v2h-1zM1024 735h1v2h-1zM1025 740h1v2h-1zM1025 745h1v2h-1zM1026 750h1v4h-1zM1027 755h1v4h-1zM1027 760h1v3h-1zM1028 765h1v3h-1zM1029 775h1v3h-1zM973 581h1v2h-1zM972 582h1v4h-1zM972 585h2v1h-2zM973 589h1v4h-1zM973 591h2v1h-2zM974 596h2v1h-2zM973 601h1v2h-1zM974 614h1v3h-1zM972 616h1v2h-1zM973 626h1v4h-1zM973 629h1v4h-1zM974 636h1v4h-1zM975 641h1v3h-1zM976 649h1v3h-1zM974 652h1v2h-1zM976 655h1v4h-1zM974 662h1v2h-1zM976 665h1v3h-1zM976 668h1v2h-1zM975 670h1v4h-1zM975 674h1v4h-1zM976 679h1v4h-1zM976 684h1v2h-1zM975 686h2v1h-2zM976 688h1v3h-1zM976 694h1v2h-1zM977 697h2v1h-2zM977 701h1v3h-1zM977 704h1v4h-1zM977 707h1v3h-1zM977 713h2v1h-2zM979 720h1v2h-1zM978 722h2v1h-2zM979 735h1v2h-1zM980 737h1v3h-1zM979 742h1v3h-1zM980 745h1v4h-1zM982 752h1v3h-1zM982 758h1v2h-1zM982 765h1v4h-1zM982 773h1v4h-1zM983 778h1v2h-1zM984 781h1v4h-1zM979 520h1v3h-1zM980 524h1v3h-1zM980 532h1v2h-1zM980 537h1v3h-1zM979 541h1v3h-1zM979 545h1v3h-1zM980 548h1v3h-1zM979 553h1v4h-1zM979 561h1v2h-1zM980 564h1v2h-1zM981 572h1v2h-1zM980 576h1v3h-1zM980 580h1v3h-1zM980 589h1v2h-1zM981 591h1v2h-1zM980 597h1v2h-1zM980 601h1v3h-1zM979 604h1v3h-1zM980 612h1v3h-1zM980 615h1v4h-1zM980 620h1v3h-1zM980 629h1v2h-1zM980 635h1v4h-1zM980 644h1v4h-1zM981 648h1v4h-1zM980 664h1v3h-1zM981 672h1v3h-1zM981 676h1v4h-1zM981 680h1v4h-1zM982 683h1v3h-1zM981 689h1v2h-1zM981 693h1v3h-1zM981 697h1v3h-1zM982 700h1v4h-1zM982 712h1v3h-1zM981 716h1v4h-1zM982 721h1v4h-1zM981 725h1v2h-1zM983 733h1v2h-1zM984 739h1v4h-1zM984 744h1v3h-1zM984 753h1v3h-1zM984 756h1v4h-1zM985 764h1v3h-1zM987 781h1v2h-1zM855 673h1v3h-1zM870 777h2v1h-2zM837 539h1v2h-1zM843 600h2v1h-2zM841 533h2v1h-2zM841 632h1v2h-1zM862 778h1v3h-1zM837 552h1v4h-1zM835 540h1v1h-1zM842 676h1v2h-1zM845 669h1v1h-1zM859 747h1v1h-1zM832 520h1v3h-1zM849 707h1v4h-1zM856 727h2v1h-2zM843 520h1v2h-1zM855 732h1v1h-1zM865 751h1v2h-1zM856 703h1v4h-1zM845 629h1v4h-1zM845 597h1v2h-1zM847 636h2v1h-2zM851 680h1v1h-1zM850 707h1v3h-1zM839 542h1v2h-1zM871 776h1v2h-1zM869 794h1v4h-1zM840 575h1v2h-1zM870 788h2v1h-2zM835 600h1v2h-1zM847 637h2v1h-2zM834 528h1v2h-1zM836 557h1v2h-1zM866 789h1v1h-1zM844 619h1v2h-1zM850 725h1v4h-1zM851 707h1v1h-1zM843 574h1v2h-1zM851 696h1v1h-1zM845 609h1v1h-1zM850 690h1v2h-1zM848 709h1v4h-1zM849 622h2v1h-2zM848 682h1v4h-1zM851 683h1v2h-1zM845 545h1v1h-1zM847 637h1v2h-1zM861 763h1v4h-1zM846 619h2v1h-2zM850 631h2v1h-2zM847 675h2v1h-2zM859 766h1v2h-1zM840 630h1v3h-1zM842 605h1v4h-1zM846 688h2v1h-2zM851 732h1v1h-1zM838 609h1v3h-1zM837 610h2v1h-2zM867 768h1v3h-1zM853 701h1v3h-1zM855 705h1v3h-1zM836 518h1v3h-1zM849 649h1v2h-1zM855 738h1v2h-1zM859 716h2v1h-2zM844 532h2v1h-2zM844 627h1v4h-1zM846 534h1v2h-1zM840 619h1v2h-1zM842 593h2v1h-2zM845 521h1v2h-1zM857 704h1v2h-1zM847 607h1v1h-1zM849 673h1v4h-1zM851 679h1v3h-1zM868 775h1v4h-1zM833 538h1v2h-1zM840 657h1v1h-1zM845 606h1v1h-1zM845 680h1v2h-1zM853 690h1v1h-1zM836 563h1v1h-1zM852 664h1v2h-1zM865 767h2v1h-2zM850 716h1v3h-1zM840 558h1v4h-1zM836 541h1v4h-1zM846 629h1v2h-1zM856 746h1v1h-1zM862 770h1v2h-1zM840 633h1v2h-1zM833 542h1v1h-1zM850 704h1v3h-1zM835 565h1v2h-1zM846 684h1v2h-1zM846 526h2v1h-2zM849 658h2v1h-2zM837 534h2v1h-2zM844 627h1v2h-1zM856 730h2v1h-2zM843 661h1v2h-1zM851 733h1v2h-1zM847 619h1v2h-1zM861 737h1v1h-1zM847 671h1v3h-1zM868 785h1v2h-1zM832 521h1v2h-1zM846 518h1v3h-1zM853 697h1v4h-1zM851 674h1v2h-1zM864 779h1v3h-1zM838 527h1v3h-1zM841 534h1v3h-1zM864 769h1v4h-1zM847 706h1v2h-1zM836 593h1v3h-1zM844 574h1v3h-1zM859 762h1v2h-1zM855 673h1v3h-1zM857 752h1v1h-1zM836 537h1v3h-1zM865 744h1v1h-1zM836 558h1v2h-1zM870 774h1v4h-1zM836 584h1v2h-1zM835 590h1v1h-1zM848 673h1v2h-1zM843 535h2v1h-2zM836 566h2v1h-2zM855 725h1v2h-1zM847 702h1v2h-1zM859 726h2v1h-2zM832 519h1v3h-1zM835 541h2v1h-2zM845 616h1v1h-1zM853 661h1v2h-1zM839 557h1v4h-1zM860 715h1v1h-1zM842 557h1v4h-1zM860 753h1v1h-1zM846 623h1v4h-1zM849 641h1v2h-1zM845 580h1v3h-1zM834 548h1v4h-1zM851 699h1v3h-1zM840 637h1v1h-1zM845 692h2v1h-2zM838 600h1v1h-1zM851 723h1v1h-1zM845 546h1v2h-1zM849 631h1v2h-1zM841 522h1v3h-1zM843 568h1v4h-1zM857 730h1v3h-1zM858 721h1v2h-1zM841 562h1v2h-1zM844 558h1v2h-1zM841 625h1v2h-1zM866 790h1v1h-1zM845 634h1v2h-1zM862 764h1v2h-1zM858 737h1v4h-1zM840 529h1v2h-1zM842 635h1v1h-1zM843 577h1v2h-1zM868 788h1v2h-1zM839 581h1v1h-1zM857 709h2v1h-2zM849 721h1v3h-1zM849 656h2v1h-2zM861 770h1v4h-1zM847 562h1v3h-1zM842 643h1v2h-1zM839 644h1v4h-1zM844 680h1v3h-1zM834 541h1v2h-1zM853 663h1v4h-1zM862 773h2v1h-2zM850 701h1v4h-1zM843 552h2v1h-2zM842 642h1v2h-1zM850 630h1v4h-1zM852 687h1v3h-1zM868 783h1v3h-1zM847 558h1v3h-1zM845 534h1v3h-1zM857 707h1v2h-1zM847 588h2v1h-2zM855 738h1v2h-1zM857 755h1v2h-1zM857 756h1v2h-1zM836 544h1v1h-1zM837 522h1v2h-1zM857 745h1v4h-1zM850 644h1v4h-1zM855 722h1v2h-1zM856 695h1v2h-1zM862 748h1v1h-1zM858 756h1v2h-1zM873 789h1v4h-1zM847 600h1v1h-1zM853 673h1v2h-1zM832 531h1v3h-1zM865 757h1v2h-1zM849 686h1v4h-1zM867 781h1v4h-1zM834 523h1v3h-1zM842 655h1v3h-1zM846 648h2v1h-2zM843 601h1v4h-1zM848 664h1v2h-1zM845 683h1v2h-1zM833 524h1v3h-1zM856 697h2v1h-2zM865 745h1v2h-1zM863 769h1v1h-1zM836 602h1v3h-1zM839 652h1v2h-1zM855 706h1v3h-1zM854 675h1v2h-1zM838 636h1v3h-1zM842 516h1v2h-1zM838 532h1v3h-1zM846 630h1v2h-1zM863 743h1v2h-1zM845 688h1v4h-1zM847 658h2v1h-2zM841 636h1v1h-1zM844 552h1v3h-1zM837 591h1v4h-1zM868 777h1v2h-1zM842 631h1v3h-1zM851 642h1v4h-1zM850 630h1v4h-1zM853 659h1v4h-1zM852 725h1v1h-1zM852 673h1v2h-1zM834 524h1v2h-1zM856 710h1v1h-1zM836 546h1v1h-1zM841 582h1v2h-1zM846 546h1v4h-1zM846 611h1v2h-1zM847 680h1v3h-1zM837 521h1v3h-1zM863 783h1v1h-1zM850 649h1v3h-1zM844 614h1v2h-1zM845 624h1v3h-1zM849 702h1v4h-1zM857 704h1v1h-1zM844 607h1v2h-1zM848 607h1v4h-1zM845 691h1v4h-1zM851 679h1v1h-1zM838 578h2v1h-2zM846 624h1v2h-1zM854 685h1v3h-1zM838 519h1v2h-1zM847 618h1v3h-1zM837 609h1v2h-1zM843 586h1v3h-1zM845 574h1v2h-1zM842 587h1v2h-1zM848 714h1v4h-1zM861 751h1v1h-1zM841 536h1v3h-1zM851 654h1v4h-1zM842 627h1v2h-1zM847 606h1v2h-1zM850 706h2v1h-2zM842 629h2v1h-2zM845 591h1v2h-1zM843 626h1v1h-1zM859 738h1v3h-1zM842 667h1v2h-1zM850 642h1v3h-1zM834 546h1v1h-1zM847 691h2v1h-2zM861 770h1v4h-1zM844 582h1v1h-1zM840 538h1v2h-1zM837 592h1v4h-1zM854 730h1v2h-1zM855 695h1v2h-1zM848 647h1v4h-1zM842 609h2v1h-2zM857 730h1v4h-1zM864 756h1v3h-1zM841 576h1v3h-1zM855 703h1v4h-1zM847 659h1v1h-1zM855 743h1v3h-1zM832 527h1v1h-1zM855 708h1v1h-1zM844 649h1v3h-1zM859 722h1v3h-1zM844 553h1v4h-1zM863 747h1v3h-1zM852 701h1v4h-1zM852 701h2v1h-2zM847 680h1v1h-1zM836 610h1v3h-1zM871 796h2v1h-2zM845 674h1v4h-1zM867 765h1v1h-1zM840 585h1v4h-1zM856 703h1v1h-1zM858 716h1v4h-1zM865 752h1v1h-1zM844 676h2v1h-2zM844 635h2v1h-2zM864 786h2v1h-2zM850 686h2v1h-2zM859 751h1v3h-1zM867 772h1v2h-1zM861 763h1v4h-1zM855 673h1v2h-1zM868 788h1v4h-1zM837 529h1v1h-1zM843 567h1v4h-1zM847 685h1v4h-1zM840 605h2v1h-2zM853 701h1v4h-1zM863 770h1v1h-1zM866 789h1v4h-1zM842 610h1v3h-1zM841 584h1v3h-1zM856 743h1v4h-1zM849 655h2v1h-2zM849 624h1v2h-1zM862 753h2v1h-2zM847 580h1v2h-1zM843 668h2v1h-2zM848 610h1v2h-1zM857 702h1v4h-1zM857 716h1v2h-1zM836 564h1v2h-1zM845 534h1v3h-1zM857 728h1v1h-1zM845 635h1v4h-1zM840 594h1v1h-1zM858 744h2v1h-2zM836 559h2v1h-2zM846 516h1v2h-1zM847 547h1v4h-1zM848 632h2v1h-2zM859 755h1v2h-1zM843 659h1v2h-1zM840 571h1v1h-1zM846 594h1v2h-1zM842 544h1v3h-1zM848 677h1v4h-1zM854 709h1v1h-1zM847 619h1v3h-1zM846 604h1v3h-1zM866 785h1v2h-1zM845 691h1v1h-1zM845 580h1v2h-1zM852 691h1v3h-1zM847 609h1v2h-1zM853 652h1v3h-1zM836 529h2v1h-2zM859 707h1v2h-1zM850 642h1v4h-1zM857 736h1v1h-1zM850 725h1v2h-1zM834 558h1v2h-1zM838 574h1v1h-1zM844 644h1v3h-1zM857 748h1v2h-1zM869 774h1v3h-1zM843 609h2v1h-2zM840 554h1v2h-1zM867 772h1v1h-1zM850 633h1v1h-1zM867 788h2v1h-2zM852 703h1v2h-1zM842 529h1v2h-1zM846 584h1v4h-1zM838 617h1v2h-1zM838 638h2v1h-2zM850 716h1v2h-1zM853 658h1v2h-1zM839 536h1v1h-1zM853 714h2v1h-2zM834 557h1v1h-1zM849 619h1v2h-1zM848 630h1v2h-1zM843 553h1v3h-1zM834 526h1v2h-1zM862 755h1v2h-1zM842 520h1v1h-1zM872 784h1v2h-1zM857 725h1v2h-1zM845 670h1v1h-1zM841 577h1v4h-1zM844 582h1v1h-1zM835 590h1v3h-1zM843 597h2v1h-2zM853 729h2v1h-2zM837 593h1v4h-1zM848 608h1v1h-1zM838 641h1v2h-1zM850 675h1v4h-1zM834 561h1v2h-1zM839 557h1v2h-1zM863 773h1v2h-1zM846 587h1v2h-1zM836 561h1v2h-1zM839 521h2v1h-2zM842 607h1v3h-1zM850 714h2v1h-2zM837 519h2v1h-2zM836 528h1v1h-1zM841 600h1v2h-1zM838 580h1v3h-1zM864 763h1v4h-1zM834 550h1v2h-1zM856 688h1v1h-1zM855 726h1v1h-1zM841 636h1v3h-1zM863 757h1v4h-1zM834 550h1v2h-1zM865 757h1v1h-1zM839 615h1v3h-1zM851 636h1v2h-1zM841 660h1v2h-1zM867 753h1v2h-1zM861 726h2v1h-2zM856 745h1v1h-1zM847 569h1v4h-1zM836 518h2v1h-2zM840 622h1v4h-1zM846 595h1v3h-1zM843 624h1v2h-1zM870 795h1v2h-1zM837 623h2v1h-2zM861 767h1v4h-1zM840 616h1v3h-1zM855 699h1v4h-1zM868 791h1v2h-1zM838 629h1v4h-1zM843 609h1v1h-1zM858 754h1v3h-1zM831 517h1v2h-1zM850 662h1v2h-1zM845 630h1v2h-1zM862 738h1v3h-1zM834 533h1v2h-1zM843 528h1v1h-1zM842 601h1v3h-1zM848 657h1v1h-1zM843 517h2v1h-2zM842 544h2v1h-2zM855 739h1v4h-1zM853 705h1v2h-1zM840 644h1v2h-1zM851 673h1v2h-1zM864 749h1v2h-1zM867 765h1v2h-1zM845 681h1v2h-1zM853 658h1v2h-1zM863 784h1v2h-1zM849 636h1v2h-1zM842 632h2v1h-2zM850 633h1v4h-1zM841 621h1v2h-1zM839 578h1v2h-1zM843 665h1v4h-1zM843 640h1v4h-1zM838 540h1v2h-1zM834 535h1v2h-1zM871 779h2v1h-2zM838 522h1v3h-1zM855 725h2v1h-2zM838 520h2v1h-2zM839 595h1v1h-1zM852 738h1v1h-1zM840 635h1v4h-1zM847 604h1v2h-1zM846 618h1v2h-1zM846 691h1v2h-1zM842 652h1v3h-1zM867 760h2v1h-2zM852 700h1v2h-1zM843 600h1v3h-1zM842 585h1v2h-1zM849 679h2v1h-2zM842 669h1v3h-1zM860 751h1v1h-1zM860 754h1v3h-1zM849 649h1v4h-1zM835 529h1v4h-1zM844 662h1v2h-1zM863 739h2v1h-2zM857 758h1v2h-1zM850 635h1v2h-1zM833 554h2v1h-2zM850 683h1v2h-1zM845 591h1v4h-1zM849 652h2v1h-2zM868 760h1v1h-1zM837 528h1v3h-1zM864 783h1v1h-1zM841 552h1v2h-1zM857 716h1v2h-1zM855 726h1v4h-1zM852 713h1v1h-1zM835 586h1v1h-1zM853 679h1v4h-1zM842 530h1v4h-1zM853 718h1v2h-1zM839 522h1v4h-1zM851 718h1v2h-1zM859 703h1v1h-1zM846 696h1v4h-1zM837 613h1v1h-1zM839 540h1v4h-1zM845 546h1v2h-1zM863 739h1v4h-1zM850 677h1v1h-1zM862 749h1v4h-1zM843 634h1v1h-1zM849 688h2v1h-2zM837 539h1v2h-1zM850 651h1v1h-1zM849 673h1v2h-1zM843 549h2v1h-2zM849 624h1v2h-1zM850 689h1v3h-1zM853 668h2v1h-2zM851 677h2v1h-2zM841 546h1v1h-1zM854 696h1v2h-1zM844 557h1v4h-1zM860 766h2v1h-2zM844 534h2v1h-2zM836 533h1v1h-1zM853 688h1v2h-1zM838 549h1v4h-1zM852 715h1v2h-1zM844 637h1v4h-1zM872 782h1v1h-1zM841 656h1v2h-1zM847 603h1v2h-1zM839 548h1v3h-1zM851 691h1v2h-1zM845 681h2v1h-2zM846 546h1v2h-1zM845 537h1v1h-1zM868 784h2v1h-2zM870 795h1v4h-1zM838 625h1v4h-1zM843 606h1v2h-1zM842 601h1v2h-1zM867 774h1v2h-1zM837 536h1v4h-1zM854 675h1v1h-1zM849 648h1v1h-1zM857 709h1v4h-1zM855 702h1v4h-1zM858 743h2v1h-2zM856 720h1v3h-1zM865 770h2v1h-2zM851 651h1v1h-1zM845 628h1v4h-1zM846 636h1v2h-1zM841 550h1v4h-1zM846 517h1v4h-1zM855 728h1v2h-1zM845 605h1v2h-1zM857 746h1v2h-1zM836 543h1v4h-1zM874 793h1v4h-1zM846 535h1v2h-1zM847 563h1v2h-1zM842 581h1v4h-1zM844 600h1v4h-1zM838 526h1v1h-1zM864 760h1v2h-1zM837 595h1v3h-1zM860 767h1v2h-1zM837 583h1v2h-1zM842 630h1v3h-1zM843 615h1v3h-1zM843 636h1v1h-1zM836 581h1v4h-1zM845 562h1v3h-1zM851 714h1v1h-1zM845 617h1v3h-1zM849 619h1v1h-1zM863 751h1v2h-1zM842 623h1v1h-1zM853 723h1v2h-1zM853 707h2v1h-2zM847 547h1v3h-1zM849 627h1v4h-1zM839 639h1v1h-1zM850 638h1v2h-1zM866 777h1v2h-1zM835 554h1v3h-1zM845 542h2v1h-2zM844 625h1v2h-1zM844 658h1v2h-1zM856 752h1v2h-1zM857 725h1v2h-1zM853 662h1v3h-1zM845 602h1v4h-1zM842 526h2v1h-2zM851 634h1v4h-1zM847 579h1v1h-1zM859 764h1v2h-1zM843 570h1v2h-1zM832 532h1v3h-1zM847 599h1v1h-1zM846 524h1v3h-1zM843 614h1v1h-1zM872 784h1v2h-1zM848 602h1v3h-1zM842 659h2v1h-2zM855 744h1v2h-1zM839 533h1v1h-1zM851 721h1v1h-1zM863 750h2v1h-2zM852 693h1v2h-1zM836 606h1v1h-1zM853 720h1v1h-1zM841 625h1v2h-1zM846 567h2v1h-2zM873 794h1v1h-1zM862 771h1v2h-1zM837 527h1v2h-1zM853 650h1v1h-1zM860 747h2v1h-2zM840 536h1v1h-1zM851 645h1v4h-1zM848 698h1v3h-1zM848 615h1v4h-1zM851 720h1v1h-1zM840 611h1v3h-1zM851 661h1v2h-1zM865 743h1v4h-1zM844 573h2v1h-2zM845 563h1v2h-1zM863 755h1v3h-1zM839 610h1v3h-1zM864 745h1v1h-1zM834 581h1v4h-1zM840 609h1v4h-1zM847 581h2v1h-2zM840 617h1v3h-1zM840 548h1v3h-1zM838 598h1v1h-1zM843 582h1v2h-1zM860 742h1v3h-1zM847 668h1v2h-1zM857 686h1v2h-1zM835 586h1v2h-1zM844 637h1v2h-1zM874 798h1v3h-1zM843 635h1v3h-1zM849 668h1v2h-1zM844 660h1v3h-1zM841 558h1v1h-1zM843 662h1v1h-1zM846 554h2v1h-2zM847 645h1v2h-1zM850 702h2v1h-2zM849 695h1v2h-1zM850 648h1v2h-1zM854 720h1v2h-1zM844 628h1v4h-1zM839 585h1v3h-1zM847 573h1v1h-1zM866 784h1v2h-1zM847 617h1v3h-1zM853 661h1v2h-1zM861 721h1v4h-1zM837 616h1v2h-1zM847 671h1v2h-1zM844 683h1v2h-1zM844 535h2v1h-2zM868 786h2v1h-2zM846 543h2v1h-2zM853 657h1v3h-1zM843 635h2v1h-2zM864 753h1v4h-1zM851 660h1v4h-1zM840 605h1v3h-1zM844 566h1v1h-1zM852 669h1v2h-1zM850 671h1v4h-1zM857 723h1v4h-1zM851 678h1v3h-1zM857 761h1v4h-1zM835 544h1v3h-1zM839 613h1v4h-1zM844 541h1v4h-1zM870 771h1v4h-1zM852 684h1v1h-1zM862 743h1v4h-1zM865 763h1v4h-1zM863 748h1v4h-1zM838 633h1v4h-1zM860 756h1v4h-1zM850 641h2v1h-2zM859 725h1v3h-1zM862 760h1v2h-1zM852 715h1v2h-1zM847 592h2v1h-2zM872 785h1v2h-1zM843 636h1v3h-1zM838 569h1v1h-1zM841 645h1v3h-1zM847 555h2v1h-2zM833 557h1v2h-1zM845 645h1v4h-1zM841 621h1v4h-1zM856 704h2v1h-2zM838 628h1v2h-1zM839 527h1v2h-1zM863 762h1v3h-1zM863 772h1v3h-1zM849 621h1v4h-1zM870 791h1v3h-1zM839 553h1v4h-1zM848 709h1v1h-1zM846 654h1v2h-1zM859 750h2v1h-2zM834 532h1v4h-1zM863 773h1v2h-1zM841 539h2v1h-2zM840 618h1v3h-1zM846 677h1v3h-1zM854 727h2v1h-2zM858 710h2v1h-2zM837 621h1v2h-1zM862 733h2v1h-2zM842 618h1v2h-1zM841 596h2v1h-2zM848 670h1v1h-1zM871 796h1v2h-1zM838 543h1v1h-1zM860 753h1v2h-1zM867 787h1v2h-1zM853 731h1v2h-1zM846 585h1v4h-1zM841 565h1v4h-1zM863 756h2v1h-2zM840 551h1v2h-1zM846 643h1v1h-1zM864 748h1v4h-1zM835 577h2v1h-2zM832 538h1v3h-1zM856 698h2v1h-2zM840 606h1v2h-1zM840 615h1v3h-1zM838 553h1v2h-1zM854 700h1v1h-1zM847 705h1v1h-1zM845 660h2v1h-2zM850 708h1v2h-1zM853 703h1v2h-1zM846 545h1v2h-1zM867 753h1v2h-1zM844 533h1v2h-1zM837 540h2v1h-2zM842 608h1v2h-1zM862 756h1v2h-1zM838 586h1v3h-1zM847 644h1v3h-1zM850 670h1v4h-1zM839 624h1v2h-1zM839 576h1v3h-1zM849 643h1v1h-1zM841 525h1v1h-1zM839 523h2v1h-2zM856 734h1v3h-1zM859 703h2v1h-2zM861 772h1v2h-1zM847 677h1v1h-1zM859 709h1v2h-1zM836 573h1v3h-1zM842 529h1v1h-1zM846 663h1v2h-1zM860 745h2v1h-2zM849 633h1v2h-1zM847 629h2v1h-2zM841 599h1v2h-1zM844 644h2v1h-2zM855 678h1v4h-1zM839 647h1v2h-1zM857 739h1v4h-1zM841 590h1v4h-1zM860 752h1v1h-1zM835 529h1v1h-1zM839 566h1v2h-1zM835 562h1v1h-1zM842 575h1v3h-1zM838 641h1v3h-1zM849 620h1v3h-1zM836 562h1v4h-1zM844 670h1v2h-1zM841 559h1v3h-1zM833 541h1v4h-1zM850 696h1v4h-1zM840 573h1v4h-1zM868 772h2v1h-2zM861 760h2v1h-2zM840 576h1v4h-1zM867 775h2v1h-2zM839 600h2v1h-2zM855 688h1v3h-1zM854 716h1v2h-1zM856 695h1v1h-1zM844 518h1v1h-1zM842 624h1v1h-1zM833 556h1v2h-1zM852 648h1v1h-1z" fill="#5d5d5d"/>
<g shape-rendering="auto"><circle cx="857.5" cy="607.5" r="3.200" fill="none" stroke="#40082f" stroke-width="1.700"/><path d="M855 607.5h5M857.5 605v5" stroke="#40082f" stroke-width="1.200"/></g>
<g shape-rendering="auto"><circle cx="913.5" cy="658.5" r="3.200" fill="none" stroke="#40082f" stroke-width="1.700"/><path d="M911 658.5h5M913.5 656v5" stroke="#40082f" stroke-width="1.200"/></g>
<g shape-rendering="auto"><circle cx="980.5" cy="653.5" r="3.200" fill="none" stroke="#40082f" stroke-width="1.700"/><path d="M978 653.5h5M980.5 651v5" stroke="#40082f" stroke-width="1.200"/></g>
<g shape-rendering="auto"><circle cx="1020.5" cy="595.5" r="3.200" fill="none" stroke="#40082f" stroke-width="1.700"/><path d="M1018 595.5h5M1020.5 593v5" stroke="#40082f" stroke-width="1.200"/></g>
</svg>
<svg width="1483" height="38" viewBox="0 0 1483 38" style="position:absolute;left:0;top:0">
<rect x="-1" y="16.500" width="3.400" height="17.500" fill="#909090"/>
<rect x="13.300" y="18" width="13.800" height="9.500" rx="0.800" fill="#c9c9c9" stroke="#2e2e2e" stroke-width="1.600" paint-order="stroke" stroke-linejoin="round"/>
<polygon points="28.300,23 34.800,16.400 34.800,28.900" fill="#c9c9c9" stroke="#2e2e2e" stroke-width="1.600" paint-order="stroke" stroke-linejoin="round"/>
<rect x="42" y="15" width="13.800" height="9.300" rx="0.800" fill="#c9c9c9" stroke="#2e2e2e" stroke-width="1.600" paint-order="stroke" stroke-linejoin="round"/>
<polygon points="56.700,19.800 63.500,13.500 63.500,25.800" fill="#c9c9c9" stroke="#2e2e2e" stroke-width="1.600" paint-order="stroke" stroke-linejoin="round"/>
<path d="M44.500 25v-1.600a2.500 2.500 0 0 1 5 0V25" fill="none" stroke="#2e2e2e" stroke-width="3.800"/>
<path d="M44.500 25v-1.600a2.500 2.500 0 0 1 5 0V25" fill="none" stroke="#47b6c8" stroke-width="2.300"/>
<rect x="46" y="22.600" width="2" height="2.200" fill="#2e2e2e"/>
<rect x="42.500" y="24.300" width="9" height="7.200" rx="0.800" fill="#47b6c8" stroke="#2e2e2e" stroke-width="1.600" paint-order="stroke" stroke-linejoin="round"/>
<rect x="46.200" y="26.800" width="1.700" height="2" fill="#2e2e2e"/>
<rect x="71.200" y="15" width="13.300" height="8.500" rx="0.800" fill="#c9c9c9" stroke="#2e2e2e" stroke-width="1.600" paint-order="stroke" stroke-linejoin="round"/>
<polygon points="85.800,19.800 92.200,13.500 92.200,25.800" fill="#c9c9c9" stroke="#2e2e2e" stroke-width="1.600" paint-order="stroke" stroke-linejoin="round"/>
<circle cx="76.900" cy="25.500" r="6.800" fill="#444"/>
<circle cx="76.900" cy="25.500" r="3.900" fill="none" stroke="#47b6c8" stroke-width="2.400"/>
<circle cx="76.900" cy="25.500" r="5.300" fill="none" stroke="#47b6c8" stroke-width="1.800" stroke-dasharray="2.080 2.080"/>
<polygon points="106,13.800 114.900,13.800 114.900,31.100 110.400,27.500 106,31.100" fill="#c9c9c9" stroke="#2e2e2e" stroke-width="1.600" paint-order="stroke" stroke-linejoin="round"/>
<polygon points="128.800,32.800 134.400,26.700 149.800,25.900 144.100,33.200" fill="#e4e4e4" stroke="#2e2e2e" stroke-width="1.600" paint-order="stroke" stroke-linejoin="round"/>
<path d="M139.500 33L144.700 26.200M135 33L139.500 27M131.600 29.800L147 29.400" stroke="#4a4a4a" stroke-width="1.100"/>
<polygon points="136.400,20.200 143.700,13.800 143.700,25.100 136.400,31.100" fill="#47b6c8" stroke="#2e2e2e" stroke-width="1.600" paint-order="stroke" stroke-linejoin="round"/>
<path d="M167.200 16V21.800H161" fill="none" stroke="#e0e0e0" stroke-width="1.800"/>
<polygon points="167.200,12 171,16.500 163.400,16.500" fill="#e0e0e0"/>
<polygon points="157.300,21.800 162,18 162,25.600" fill="#e0e0e0"/>
<circle cx="173.300" cy="24.700" r="4.600" fill="#444" stroke="#2e2e2e" stroke-width="3.600"/>
<path d="M170 28.200L165.600 32.400" stroke="#2e2e2e" stroke-width="3.600" stroke-linecap="round"/>
<circle cx="173.300" cy="24.700" r="4.600" fill="none" stroke="#47b6c8" stroke-width="2"/>
<path d="M170 28.200L165.600 32.400" stroke="#47b6c8" stroke-width="2" stroke-linecap="round"/>
<path d="M196 28.500q3.500 4.500 6.500 2.500q2.500-2 0-4.500" fill="none" stroke="#e0e0e0" stroke-width="1.500"/>
<polygon points="202,13.300 205.700,16.900 196,27.300 192.300,23.700" fill="#c9c9c9" stroke="#2e2e2e" stroke-width="1.600" paint-order="stroke" stroke-linejoin="round"/>
<polygon points="192.300,23.700 196,27.300 192.600,30.600 188.400,31.400 188.300,28" fill="#47b6c8" stroke="#2e2e2e" stroke-width="1.600" paint-order="stroke" stroke-linejoin="round"/>
<path d="M218.6 10.5V34.8" stroke="#868686" stroke-width="1.2"/><rect x="216.6" y="16.300" width="4" height="12" rx="1.500" fill="#929292"/>
<rect x="228.500" y="9" width="27.500" height="27" fill="#5285a6"/>
<rect x="233.300" y="14.200" width="17.400" height="16.900" fill="#efefef" stroke="#3a3a3a" stroke-width="1"/>
<rect x="236.2" y="16.8" width="2.900" height="2.900" fill="#1a1a1a"/>
<rect x="236.2" y="21.4" width="2.900" height="2.900" fill="#1a1a1a"/>
<rect x="236.2" y="26.0" width="2.900" height="2.900" fill="#1a1a1a"/>
<rect x="240.8" y="16.8" width="2.900" height="2.900" fill="#1a1a1a"/>
<rect x="240.8" y="21.4" width="2.900" height="2.900" fill="#1a1a1a"/>
<rect x="240.8" y="26.0" width="2.900" height="2.900" fill="#1a1a1a"/>
<rect x="245.4" y="16.8" width="2.900" height="2.900" fill="#1a1a1a"/>
<rect x="245.4" y="21.4" width="2.900" height="2.900" fill="#1a1a1a"/>
<rect x="245.4" y="26.0" width="2.900" height="2.900" fill="#1a1a1a"/>
<rect x="260.800" y="14.100" width="20.400" height="17.100" fill="#3c3c3c" stroke="#d8d8d8" stroke-width="1.500"/>
<rect x="261" y="14.300" width="20" height="3.900" fill="#d8d8d8"/>
<rect x="261" y="27.200" width="20" height="3.900" fill="#d8d8d8"/>
<rect x="263.0" y="15.500" width="2.600" height="1.500" fill="#3c3c3c"/>
<rect x="263.0" y="28.400" width="2.600" height="1.500" fill="#3c3c3c"/>
<rect x="267.5" y="15.500" width="2.600" height="1.500" fill="#3c3c3c"/>
<rect x="267.5" y="28.400" width="2.600" height="1.500" fill="#3c3c3c"/>
<rect x="272.0" y="15.500" width="2.600" height="1.500" fill="#3c3c3c"/>
<rect x="272.0" y="28.400" width="2.600" height="1.500" fill="#3c3c3c"/>
<rect x="276.5" y="15.500" width="2.600" height="1.500" fill="#3c3c3c"/>
<rect x="276.5" y="28.400" width="2.600" height="1.500" fill="#3c3c3c"/>
<rect x="289.600" y="14.100" width="19.800" height="17.100" fill="#3a3a3a" stroke="#d8d8d8" stroke-width="1.700"/>
<circle cx="299.700" cy="22.700" r="4.700" fill="#47b6c8"/>
<rect x="315.700" y="9.800" width="25.500" height="25.600" fill="#484848" stroke="#333" stroke-width="1.400"/>
<rect x="318" y="13.200" width="20.800" height="18.400" fill="#545454"/>
<circle cx="328.400" cy="22.700" r="6.100" fill="#464646"/>
<rect x="347.100" y="14.500" width="20.100" height="16.800" fill="#3c3c3c" stroke="#d8d8d8" stroke-width="1.600"/>
<rect x="347.8" y="21.300" width="1.8" height="3" fill="#47b6c8"/>
<rect x="351.0" y="21.300" width="2.4" height="3" fill="#47b6c8"/>
<rect x="354.4" y="21.300" width="1.9" height="3" fill="#47b6c8"/>
<rect x="358.6" y="21.300" width="1.9" height="3" fill="#47b6c8"/>
<rect x="361.9" y="21.300" width="1.9" height="3" fill="#47b6c8"/>
<rect x="364.8" y="21.300" width="1.8" height="3" fill="#47b6c8"/>
<rect x="355.300" y="14.9" width="3.800" height="1.2" fill="#47b6c8"/>
<rect x="355.300" y="18.1" width="3.800" height="1.4" fill="#47b6c8"/>
<rect x="355.300" y="26.0" width="3.800" height="1.4" fill="#47b6c8"/>
<rect x="355.300" y="29.3" width="3.800" height="1.2" fill="#47b6c8"/>
<rect x="375.900" y="14.500" width="20.200" height="16.800" fill="#3c3c3c" stroke="#d8d8d8" stroke-width="1.600"/>
<circle cx="389.800" cy="20.300" r="4" fill="#47b6c8"/>
<polygon points="382.700,21.700 378.400,28.600 387.400,28.600" fill="#47b6c8"/>
<rect x="404.700" y="14.500" width="19.700" height="16.800" fill="#3c3c3c" stroke="#d8d8d8" stroke-width="1.600"/>
<path d="M436.5 10.5V34.8" stroke="#868686" stroke-width="1.2"/><rect x="434.5" y="16.300" width="4" height="12" rx="1.500" fill="#929292"/>
<rect x="446.200" y="9" width="27.700" height="27.300" fill="#5285a6"/>
<path d="M460.7 22.5L460.7 12.4M460.7 22.5L469.4 27.5M460.7 22.5L452.0 27.6" stroke="#9cc4dc" stroke-width="1.100"/>
<polygon points="460.70,12.40 469.45,17.45 469.45,27.55 460.70,32.60 451.95,27.55 451.95,17.45" fill="none" stroke="#2e2e2e" stroke-width="3.6" stroke-linejoin="round"/>
<path d="M460.7 22.5L469.4 17.4M460.7 22.5L460.7 32.6M460.7 22.5L452.0 17.4" stroke="#2e2e2e" stroke-width="3.6"/>
<polygon points="460.70,12.40 469.45,17.45 469.45,27.55 460.70,32.60 451.95,27.55 451.95,17.45" fill="none" stroke="#d6d6d6" stroke-width="2.0" stroke-linejoin="round"/>
<path d="M460.7 22.5L469.4 17.4M460.7 22.5L460.7 32.6M460.7 22.5L452.0 17.4" stroke="#d6d6d6" stroke-width="2.0"/>
<polygon points="489.50,11.75 498.94,17.20 498.94,28.10 489.50,33.55 480.06,28.10 480.06,17.20" fill="#5fcfe0" stroke="#333" stroke-width="1.200" stroke-linejoin="round"/>
<polygon points="489.50,11.75 498.94,17.20 489.50,22.65 480.06,17.20" fill="#86dfea" stroke="#333" stroke-width="1"/>
<path d="M489.5 22.6L489.5 33.5" stroke="#333" stroke-width="1"/>
<defs><pattern id="ck" width="6" height="6" patternUnits="userSpaceOnUse" x="0.200" y="1.700"><rect width="6" height="6" fill="#f2f2f2"/><rect width="3" height="3" fill="#111"/><rect x="3" y="3" width="3" height="3" fill="#111"/></pattern><clipPath id="hs"><rect x="518.200" y="10" width="12" height="26"/></clipPath></defs>
<circle cx="517.800" cy="22.700" r="9.600" fill="#c9c9c9" stroke="#2e2e2e" stroke-width="1"/>
<circle cx="517.800" cy="22.700" r="9.600" fill="url(#ck)" clip-path="url(#hs)"/>
<polygon points="547.10,12.90 555.67,17.85 555.67,27.75 547.10,32.70 538.53,27.75 538.53,17.85" fill="#5fcfe0"/>
<polygon points="547.10,12.90 555.67,17.85 547.10,22.80 538.53,17.85" fill="#86dfea"/>
<polygon points="547.10,12.90 555.67,17.85 555.67,27.75 547.10,32.70 538.53,27.75 538.53,17.85" fill="none" stroke="#2e2e2e" stroke-width="3.6" stroke-linejoin="round"/>
<path d="M547.1 22.8L555.7 17.9M547.1 22.8L547.1 32.7M547.1 22.8L538.5 17.9" stroke="#2e2e2e" stroke-width="3.6"/>
<polygon points="547.10,12.90 555.67,17.85 555.67,27.75 547.10,32.70 538.53,27.75 538.53,17.85" fill="none" stroke="#d6d6d6" stroke-width="2.0" stroke-linejoin="round"/>
<path d="M547.1 22.8L555.7 17.9M547.1 22.8L547.1 32.7M547.1 22.8L538.5 17.9" stroke="#d6d6d6" stroke-width="2.0"/>
<rect x="561.100" y="9" width="27.900" height="27.300" fill="#5285a6"/>
<circle cx="575.100" cy="22.700" r="10.200" fill="url(#ck)"/>
<path d="M603.600 16.300a4.700 4.700 0 0 1 3.300 8.100q-1.300 1.400-1.300 3.600h-4q0-2.200-1.300-3.600a4.700 4.700 0 0 1 3.300-8.100z" fill="#dadada" stroke="#2e2e2e" stroke-width="1.600" paint-order="stroke" stroke-linejoin="round"/>
<rect x="601.800" y="29.300" width="3.600" height="3.200" fill="#dadada" stroke="#2e2e2e" stroke-width="1.600" paint-order="stroke" stroke-linejoin="round"/>
<rect x="602.100" y="11.700" width="3" height="3" fill="#dadada" stroke="#2e2e2e" stroke-width="1.600" paint-order="stroke" stroke-linejoin="round"/>
<rect x="593.100" y="21" width="3.300" height="2" fill="#dadada" stroke="#2e2e2e" stroke-width="1.600" paint-order="stroke" stroke-linejoin="round"/>
<rect x="611" y="21" width="3.300" height="2" fill="#dadada" stroke="#2e2e2e" stroke-width="1.600" paint-order="stroke" stroke-linejoin="round"/>
<rect x="595.300" y="14.300" width="2.600" height="2.600" transform="rotate(45 596.600 15.600)" fill="#dadada" stroke="#2e2e2e" stroke-width="1.600" paint-order="stroke" stroke-linejoin="round"/>
<rect x="609.500" y="14.300" width="2.600" height="2.600" transform="rotate(45 610.800 15.600)" fill="#dadada" stroke="#2e2e2e" stroke-width="1.600" paint-order="stroke" stroke-linejoin="round"/>
<path d="M622 25.500L629 30M623.500 23.300L631 28.200" stroke="#5a5a5a" stroke-width="1.300"/>
<circle cx="636.200" cy="21.900" r="6.800" fill="#455a5e"/>
<path d="M654.3 10.5V34.8" stroke="#868686" stroke-width="1.2"/><rect x="652.3" y="16.300" width="4" height="12" rx="1.500" fill="#929292"/>
<polygon points="668,28 677.900,23.500 687.500,28 677.900,33.300" fill="none" stroke="#3fa9ba" stroke-width="1.200"/>
<path d="M671 26.700L681 32M674 25.400L684 30.500M685 26.600L675 31.800M682 25.300L672 30.400" stroke="#3fa9ba" stroke-width="1.100"/>
<circle cx="677.800" cy="19.400" r="8" fill="#c9c9c9" stroke="#2e2e2e" stroke-width="1.600" paint-order="stroke" stroke-linejoin="round"/>
<path d="M673 25.500l3 2M677 25.500l3 2M681 24.500l3 2" stroke="#3a3a3a" stroke-width="1.500"/>
<circle cx="701.500" cy="27.400" r="5.800" fill="#5c5c5c"/>
<circle cx="706.300" cy="23.100" r="6" fill="#808080"/>
<circle cx="711.400" cy="18.400" r="6.400" fill="#c9c9c9" stroke="#2e2e2e" stroke-width="1.600" paint-order="stroke" stroke-linejoin="round"/>
<path d="M735.500 15.350A7.300 7.300 0 0 0 735.500 29.950" fill="none" stroke="#2e2e2e" stroke-width="5.600" />
<path d="M735.500 15.350A7.300 7.300 0 0 0 735.500 29.950" fill="none" stroke="#47b6c8" stroke-width="4.200"/>
<rect x="735.5" y="13.7" width="3" height="3" fill="#f0f0f0" stroke="#2e2e2e" stroke-width="1.600" paint-order="stroke" stroke-linejoin="round"/>
<rect x="738.6" y="16.7" width="3" height="3" fill="#f0f0f0" stroke="#2e2e2e" stroke-width="1.600" paint-order="stroke" stroke-linejoin="round"/>
<rect x="741.7" y="19.5" width="2.6" height="6.4" fill="#f0f0f0" stroke="#2e2e2e" stroke-width="1.600" paint-order="stroke" stroke-linejoin="round"/>
<rect x="738.6" y="25.8" width="3" height="3" fill="#f0f0f0" stroke="#2e2e2e" stroke-width="1.600" paint-order="stroke" stroke-linejoin="round"/>
<rect x="735.5" y="29" width="3" height="3" fill="#f0f0f0" stroke="#2e2e2e" stroke-width="1.600" paint-order="stroke" stroke-linejoin="round"/>
<rect x="751.200" y="9.800" width="25.800" height="25.700" fill="#484848" stroke="#333" stroke-width="1.400"/>
<rect x="755" y="13.900" width="8.500" height="8" fill="#465457"/>
<rect x="761" y="19.800" width="12.300" height="11.800" fill="#45585c"/>
<path d="M786.1 10.5V34.8" stroke="#868686" stroke-width="1.2"/><rect x="784.1" y="16.300" width="4" height="12" rx="1.500" fill="#929292"/>
<rect x="800.800" y="14.300" width="11.400" height="10.800" rx="2" fill="none" stroke="#2e2e2e" stroke-width="3.200" stroke-dasharray="3.800 2.400" stroke-dashoffset="1.500"/>
<rect x="800.800" y="14.300" width="11.400" height="10.800" rx="2" fill="none" stroke="#4cc3d4" stroke-width="1.800" stroke-dasharray="3.800 2.400" stroke-dashoffset="1.500"/>
<polygon points="811.300,18.900 811.300,30.200 814,28 815.800,32.900 818,32 816.200,27.300 819.600,27" fill="#bdbdbd" stroke="#2e2e2e" stroke-width="1.600" paint-order="stroke" stroke-linejoin="round"/>
<path d="M831.5 10.5V34.8" stroke="#868686" stroke-width="1.2"/><rect x="829.5" y="16.300" width="4" height="12" rx="1.500" fill="#929292"/>
<rect x="843.700" y="10.800" width="22.600" height="22.600" fill="#3c3c3c"/>
<rect x="852.300" y="13.500" width="11.900" height="12.400" fill="#d2d2d2"/>
<rect x="845.800" y="20" width="12.400" height="11.800" fill="#dcdcdc"/>
<rect x="852.300" y="20" width="5.900" height="5.900" fill="#c2c2c2" stroke="#3c3c3c" stroke-width="1.300"/>
<rect x="871.700" y="10.800" width="23.700" height="22.600" fill="#3c3c3c"/>
<path d="M881.400 14.200H892V25.400H887" fill="none" stroke="#dcdcdc" stroke-width="1.500"/>
<rect x="874.900" y="20" width="11.900" height="11.800" fill="#cfcfcf"/>
<rect x="899.500" y="10.800" width="25.500" height="22.600" fill="#404040"/>
<rect x="904.300" y="14.300" width="16.200" height="16.700" fill="#333" stroke="#dcdcdc" stroke-width="1.600"/>
<polygon points="907.600,20.800 910.300,18 918.400,28.700" fill="#c8c8c8"/>
<circle cx="908.300" cy="18.800" r="2.700" fill="#dcdcdc"/>
<path d="M934.5 10.5V34.8" stroke="#868686" stroke-width="1.2"/><rect x="932.5" y="16.300" width="4" height="12" rx="1.500" fill="#929292"/>
<circle cx="959.300" cy="22.300" r="9.200" fill="#d4d4d4" stroke="#2e2e2e" stroke-width="1.600" paint-order="stroke" stroke-linejoin="round"/>
<path d="M968.36 23.90L958.00 25.87M962.45 30.95L955.56 22.96M953.39 29.35L956.86 19.39M950.24 20.70L960.60 18.73M956.15 13.65L963.04 21.64M965.21 15.25L961.74 25.21" stroke="#333" stroke-width="1.500"/>
<circle cx="959.300" cy="22.300" r="3.300" fill="#333"/>
<rect x="976.200" y="10.700" width="56.900" height="20.700" rx="3" fill="#2b2b2b"/>
<rect x="1050" y="13.400" width="9.100" height="18.200" fill="#d6d6d6" stroke="#2e2e2e" stroke-width="1.600" paint-order="stroke" stroke-linejoin="round"/>
<path d="M1050.200 15.300A7.200 7.200 0 0 0 1050.200 29.700z" fill="#cdcdcd" stroke="#2e2e2e" stroke-width="1.600" paint-order="stroke" stroke-linejoin="round"/>
<path d="M1050.200 15.800A6.700 6.700 0 0 1 1050.200 29.200z" fill="#383838"/>
<rect x="1068.700" y="10.700" width="57" height="20.700" rx="3" fill="#2b2b2b"/>
<rect x="1130.200" y="9" width="27.800" height="27.400" fill="#5285a6"/>
<circle cx="1143.700" cy="22.500" r="9.400" fill="#3fb9c4" stroke="#283c44" stroke-width="1.700"/>
<path d="M1165 9H1471.100V34.800H1165a2.500 2.500 0 0 1-2.500-2.500V11.500a2.500 2.500 0 0 1 2.500-2.500z" fill="#5d5d5d"/>
<rect x="1463.300" y="9" width="2.800" height="25.800" fill="#4e4e4e"/>
</svg>
<div class="t" id="t1" style="left:983.700px;top:12.200px;font-size:19px;">0.00</div>
<div class="t" id="t2" style="left:1075.900px;top:12.200px;font-size:19px;">1.00</div>
<div class="t" id="t3" style="left:1136.100px;top:18.500px;font-size:8px;font-weight:bold;color:#1f3a40;letter-spacing:0.700px;">ON</div>
<div class="t" id="t4" style="left:1167.400px;top:14.600px;font-size:18.500px;letter-spacing:-0.130px;">ACES 1.0 SDR-video (sRGB)</div>
<div class="t" id="t5" style="left:408.900px;top:14.100px;font-size:17.500px;font-family:'Liberation Serif',serif;font-weight:bold;color:#47b6c8;transform:scaleX(1.100);transform-origin:50% 50%;">T</div>
<div class="b" id="persp" style="left:699.300px;top:1008.300px;font-size:13.300px;color:#fff;">persp</div>
<div class="b" id="ay" style="left:28.300px;top:958.300px;font-size:13.500px;color:#12e012;">y</div>
<div class="b" id="az" style="left:27.500px;top:976.300px;font-size:13.500px;color:#0000ff;">z</div>
<div class="b" id="ax" style="left:4.600px;top:982px;font-size:13px;color:#ff0000;">x</div>
<svg width="60" height="60" style="position:absolute;left:0;top:950px" shape-rendering="crispEdges"><path d="M11 46H32" stroke="#ff0000" stroke-width="2"/><rect x="30" y="42" width="2" height="2" fill="#0000ff"/><rect x="32" y="44.500" width="2" height="2.500" fill="#0000ff"/><path d="M32.600 26V44" stroke="#00ff00" stroke-width="2"/></svg>
</div>
</body></html>
